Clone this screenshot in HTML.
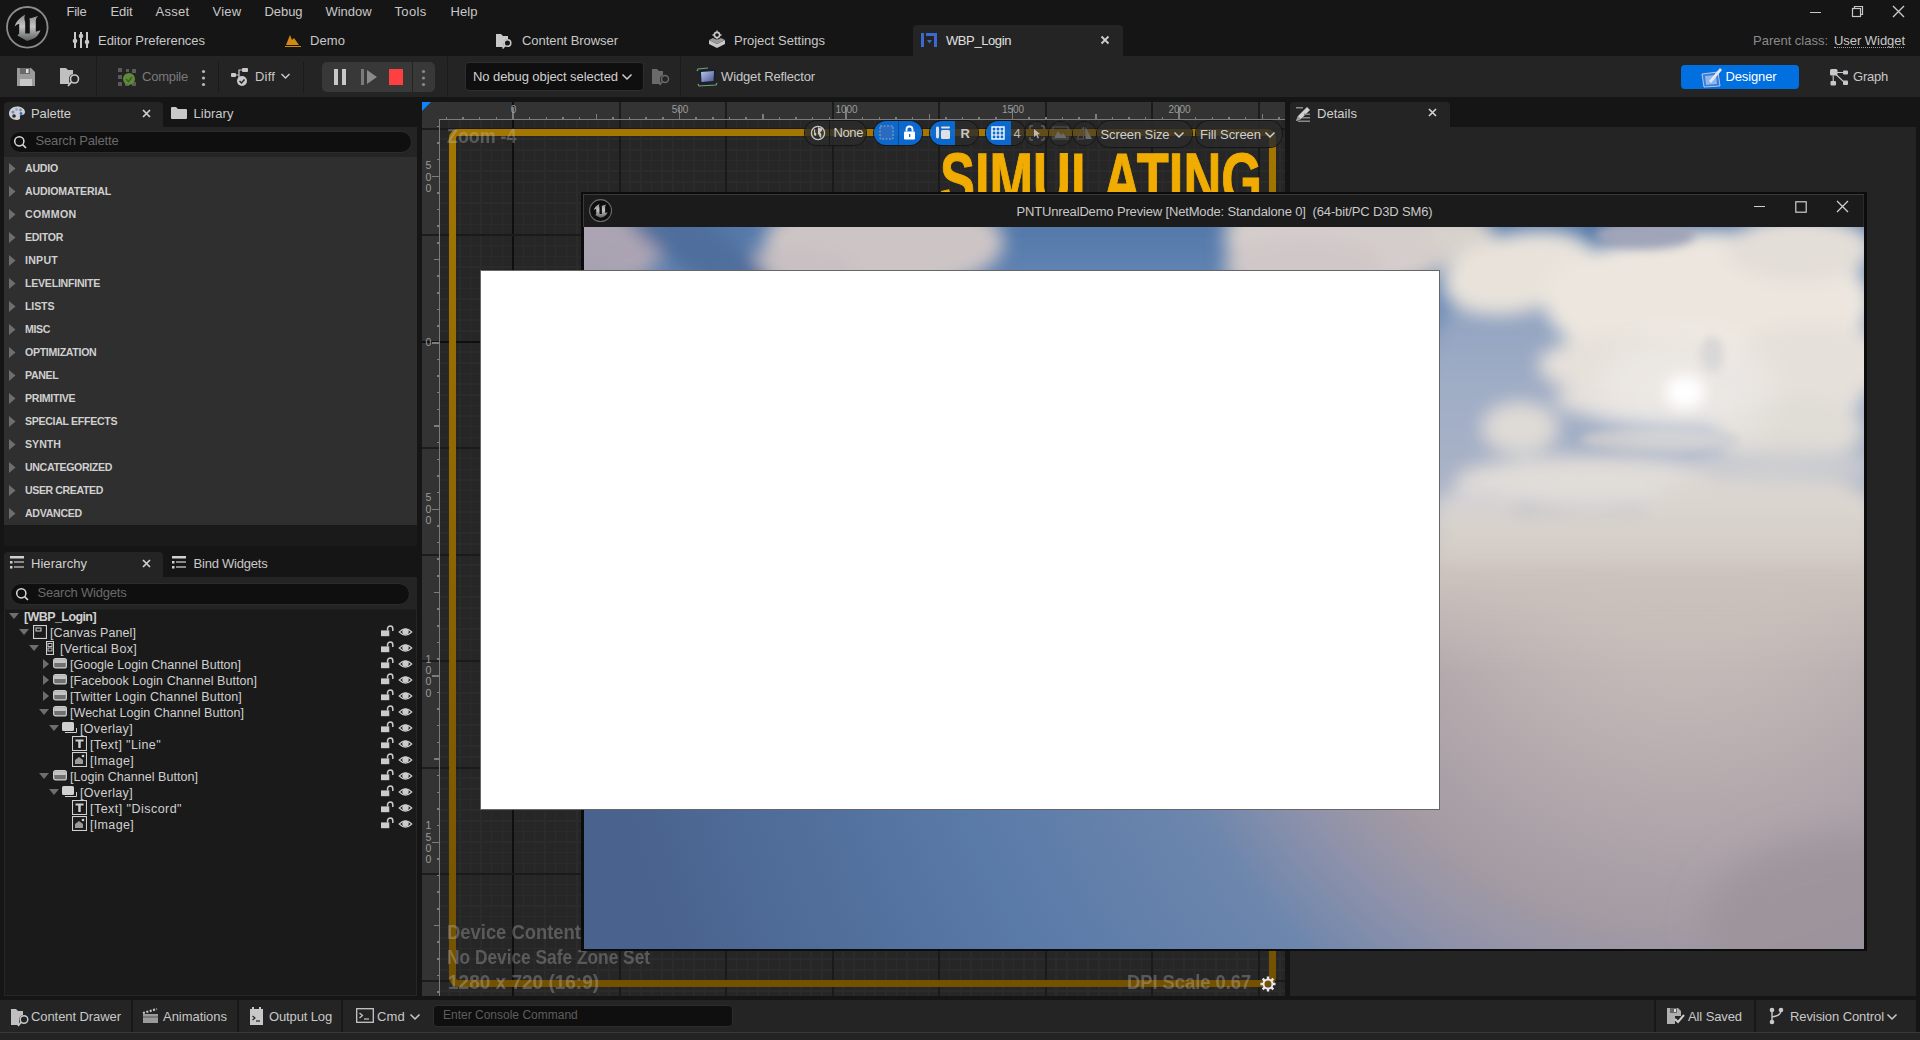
<!DOCTYPE html>
<html><head><meta charset="utf-8"><style>
html,body{margin:0;padding:0;}
body{width:1920px;height:1040px;overflow:hidden;position:relative;background:#151515;font-family:"Liberation Sans",sans-serif;}
.r{position:absolute;}
.t{position:absolute;white-space:pre;font-family:"Liberation Sans",sans-serif;}
</style></head><body>
<div class="r" style="left:0px;top:0px;width:1920px;height:56px;background:#151515;"></div>
<div class="r" style="left:0px;top:56px;width:1920px;height:41px;background:#242424;"></div>
<div class="r" style="left:0px;top:97px;width:1920px;height:5px;background:#151515;"></div>
<svg class="r" style="left:4px;top:4px;" width="48" height="48" viewBox="0 0 48 48"><defs><linearGradient id="ug" x1="0" y1="0" x2="0" y2="1"><stop offset="0" stop-color="#8a8a8a"/><stop offset="0.45" stop-color="#c4c4c4"/><stop offset="1" stop-color="#5a6060"/></linearGradient></defs>
<circle cx="23.3" cy="23.3" r="20.3" fill="#121212" stroke="#8c8c8c" stroke-width="1.8"/>
<path d="M10.6 22.6 Q12 16 21.2 10.6 Q19.6 13.5 21.2 18.5 L21.2 29.5 L25.8 29.5 L25.8 15.7 L24.9 14.8 Q29 13.5 34.1 12 Q31.8 14 31.8 16.2 L31.8 27.7 L36.5 26.3 Q34 33 28.6 35.1 L23.1 36.9 Q18 34 13.4 31.4 L15.2 29.5 L15.2 19.8 Q12.5 20.5 10.6 22.6 Z" fill="url(#ug)"/></svg>
<div class="t" style="left:66.50px;top:5.00px;font-size:13px;line-height:13px;color:#c8c8c8;letter-spacing:-0.238px;">File</div>
<div class="t" style="left:110.50px;top:5.00px;font-size:13px;line-height:13px;color:#c8c8c8;letter-spacing:-0.102px;">Edit</div>
<div class="t" style="left:155.50px;top:5.00px;font-size:13px;line-height:13px;color:#c8c8c8;letter-spacing:0.297px;">Asset</div>
<div class="t" style="left:212.50px;top:5.00px;font-size:13px;line-height:13px;color:#c8c8c8;letter-spacing:0.262px;">View</div>
<div class="t" style="left:264.50px;top:5.00px;font-size:13px;line-height:13px;color:#c8c8c8;letter-spacing:-0.066px;">Debug</div>
<div class="t" style="left:325.50px;top:5.00px;font-size:13px;line-height:13px;color:#c8c8c8;letter-spacing:-0.042px;">Window</div>
<div class="t" style="left:394.50px;top:5.00px;font-size:13px;line-height:13px;color:#c8c8c8;letter-spacing:0.328px;">Tools</div>
<div class="t" style="left:450.50px;top:5.00px;font-size:13px;line-height:13px;color:#c8c8c8;letter-spacing:0.062px;">Help</div>
<svg class="r" style="left:72px;top:31px;" width="18" height="18" viewBox="0 0 18 18"><g fill="#c8c8c8"><rect x="2" y="1" width="2" height="16"/><rect x="8" y="1" width="2" height="16"/><rect x="14" y="1" width="2" height="16"/><circle cx="3" cy="10" r="2.3"/><circle cx="9" cy="5" r="2.3"/><circle cx="15" cy="11" r="2.3"/></g></svg>
<div class="t" style="left:98.00px;top:34.00px;font-size:13px;line-height:13px;color:#c8c8c8;letter-spacing:-0.038px;">Editor Preferences</div>
<svg class="r" style="left:284px;top:33px;" width="18" height="15" viewBox="0 0 18 15"><path d="M1 13 L1 14 L17 14 L17 13 Z" fill="#d08a10"/><path d="M2 12 L6 2 L8 7 L10 5 L15 12 Z" fill="#d08a10"/></svg>
<div class="t" style="left:310.00px;top:34.00px;font-size:13px;line-height:13px;color:#c8c8c8;letter-spacing:0.078px;">Demo</div>
<svg class="r" style="left:495px;top:31px;" width="18" height="18" viewBox="0 0 18 18"><path d="M1 3 L6 3 L8 5 L13 5 L13 8 Q10 8 9 11 Q8 14 10 16 L1 16 Z" fill="#c8c8c8"/><circle cx="12.5" cy="12" r="3.3" fill="none" stroke="#c8c8c8" stroke-width="1.5"/><path d="M10.2 14.5 L7.5 17.5" stroke="#c8c8c8" stroke-width="1.6"/></svg>
<div class="t" style="left:522.00px;top:34.00px;font-size:13px;line-height:13px;color:#c8c8c8;letter-spacing:-0.056px;">Content Browser</div>
<svg class="r" style="left:708px;top:30px;" width="18" height="19" viewBox="0 0 18 19"><path d="M1 10 L9 14 L17 10 L17 14 L9 18 L1 14 Z" fill="#c8c8c8"/><path d="M1 10 L5 8 L9 10 L13 8 L17 10 L9 14 Z" fill="#9a9a9a"/><circle cx="9" cy="5" r="2.6" fill="none" stroke="#c8c8c8" stroke-width="1.6"/><g stroke="#c8c8c8" stroke-width="1.3"><path d="M9 0.5 V2"/><path d="M9 8 V9.5"/><path d="M4.5 5 H6"/><path d="M12 5 H13.5"/></g></svg>
<div class="t" style="left:734.00px;top:34.00px;font-size:13px;line-height:13px;color:#c8c8c8;letter-spacing:-0.004px;">Project Settings</div>
<div class="r" style="left:913px;top:25px;width:210px;height:31px;background:#242424;border-radius:4px 4px 0 0;"></div>
<svg class="r" style="left:920px;top:32px;" width="18" height="16" viewBox="0 0 18 16"><g fill="#3a6ad0"><rect x="1" y="1" width="3" height="14"/><rect x="6" y="1" width="11" height="3"/><rect x="14" y="4" width="3" height="11"/><path d="M7 8 L12 8 L9.5 11.5 Z"/></g></svg>
<div class="t" style="left:946.00px;top:34.00px;font-size:13px;line-height:13px;color:#e0e0e0;letter-spacing:-0.408px;">WBP_Login</div>
<svg class="r" style="left:1100px;top:35px;" width="10" height="10" viewBox="0 0 10 10"><path d="M1.5 1.5 L8.5 8.5 M8.5 1.5 L1.5 8.5" stroke="#d0d0d0" stroke-width="1.8"/></svg>
<div class="t" style="left:1753.00px;top:33.50px;font-size:13px;line-height:13px;color:#8a8a8a;letter-spacing:-0.012px;">Parent class:</div>
<div class="t" style="left:1834.00px;top:34.00px;font-size:13px;line-height:13px;color:#c8c8c8;letter-spacing:-0.048px;">User Widget</div>
<div class="r" style="left:1834px;top:47px;width:70px;height:0;border-top:1px dotted #a0a0a0;"></div>
<div class="r" style="left:1810px;top:12px;width:11px;height:1px;background:#c8c8c8;"></div>
<svg class="r" style="left:1850px;top:4px;" width="14" height="14" viewBox="0 0 14 14"><rect x="2.5" y="4.5" width="8" height="8" fill="none" stroke="#c8c8c8" stroke-width="1.2"/><path d="M4.5 4.5 V2.5 H12.5 V10.5 H10.5" fill="none" stroke="#c8c8c8" stroke-width="1.2"/></svg>
<svg class="r" style="left:1891px;top:4px;" width="15" height="15" viewBox="0 0 15 15"><path d="M2 2 L13 13 M13 2 L2 13" stroke="#c8c8c8" stroke-width="1.4"/></svg>
<svg class="r" style="left:16px;top:67px;" width="20" height="20" viewBox="0 0 20 20"><path d="M1 1 L15 1 L19 5 L19 19 L1 19 Z" fill="#9a9a9a"/><rect x="4" y="1" width="10" height="6" fill="#6a6a6a"/><rect x="10" y="2" width="2.5" height="4" fill="#ddd"/><rect x="4" y="12" width="12" height="7" fill="#c8c8c8"/></svg>
<svg class="r" style="left:59px;top:66px;" width="22" height="22" viewBox="0 0 22 22"><path d="M1 2 L7 2 L9 4 L14 4 L14 8 Q10 9 10 13 Q10 16 11 18 L1 18 Z" fill="#c0c0c0"/><circle cx="15.5" cy="13" r="4" fill="none" stroke="#c8c8c8" stroke-width="1.6"/><path d="M12.5 16 L9 20" stroke="#c8c8c8" stroke-width="1.8"/></svg>
<div class="r" style="left:96px;top:57px;width:1px;height:40px;background:#1a1a1a;"></div>
<svg class="r" style="left:117px;top:67px;" width="22" height="22" viewBox="0 0 22 22"><g fill="#5a5a5a"><rect x="1" y="1" width="4" height="4"/><rect x="9" y="2" width="3" height="3"/><rect x="15" y="2" width="4" height="4"/><rect x="1" y="8" width="4" height="4"/><rect x="1" y="15" width="4" height="4"/><rect x="8" y="15" width="4" height="4"/><rect x="15" y="15" width="4" height="4"/></g><circle cx="12" cy="12" r="6" fill="#5f8a3a"/><path d="M9 12 L11.5 14.5 L15 10" stroke="#3f5f28" stroke-width="1.6" fill="none"/></svg>
<div class="t" style="left:142.00px;top:69.60px;font-size:13px;line-height:13px;color:#7a7a7a;letter-spacing:-0.243px;">Compile</div>
<svg class="r" style="left:200px;top:69px;" width="7" height="18" viewBox="0 0 7 18"><circle cx="3.5" cy="2.5" r="1.6" fill="#b8b8b8"/><circle cx="3.5" cy="9" r="1.6" fill="#b8b8b8"/><circle cx="3.5" cy="15.5" r="1.6" fill="#b8b8b8"/></svg>
<div class="r" style="left:218px;top:62px;width:1px;height:30px;background:#1a1a1a;"></div>
<svg class="r" style="left:230px;top:67px;" width="20" height="20" viewBox="0 0 20 20"><rect x="1" y="6" width="5" height="4" rx="1" fill="#c8c8c8"/><rect x="12" y="1" width="6" height="4" rx="1" fill="#c8c8c8"/><path d="M6 8 H9 V3 H12" stroke="#c8c8c8" stroke-width="1.2" fill="none"/><path d="M9 8 V12" stroke="#c8c8c8" stroke-width="1.2"/><circle cx="12" cy="14" r="5" fill="#c8c8c8"/><path d="M9.5 14 L11.5 16 L14.5 12.5" stroke="#242424" stroke-width="1.5" fill="none"/></svg>
<div class="t" style="left:255.00px;top:69.60px;font-size:13px;line-height:13px;color:#c8c8c8;letter-spacing:0.184px;">Diff</div>
<svg class="r" style="left:280px;top:72px;" width="11" height="8" viewBox="0 0 11 8"><path d="M1.5 2 L5.5 6 L9.5 2" stroke="#c8c8c8" stroke-width="1.5" fill="none"/></svg>
<div class="r" style="left:303px;top:62px;width:1px;height:30px;background:#1a1a1a;"></div>
<div class="r" style="left:322px;top:62px;width:113px;height:30px;background:#383838;border-radius:5px;"></div>
<div class="r" style="left:412px;top:62px;width:1px;height:30px;background:#242424;"></div>
<div class="r" style="left:334px;top:69px;width:4px;height:16px;background:#c8c8c8;"></div>
<div class="r" style="left:342px;top:69px;width:4px;height:16px;background:#c8c8c8;"></div>
<div class="r" style="left:361px;top:69px;width:3px;height:16px;background:#7a7a7a;"></div>
<svg class="r" style="left:366px;top:69px;" width="12" height="16" viewBox="0 0 12 16"><path d="M1 1 L11 8 L1 15 Z" fill="#8a8a8a"/></svg>
<div class="r" style="left:389px;top:69px;width:14px;height:16px;background:#ff4040;"></div>
<svg class="r" style="left:420px;top:69px;" width="7" height="18" viewBox="0 0 7 18"><circle cx="3.5" cy="2.5" r="1.6" fill="#8a8a8a"/><circle cx="3.5" cy="9" r="1.6" fill="#8a8a8a"/><circle cx="3.5" cy="15.5" r="1.6" fill="#8a8a8a"/></svg>
<div class="r" style="left:447px;top:57px;width:1px;height:40px;background:#1a1a1a;"></div>
<div class="r" style="left:465px;top:62px;width:179px;height:29px;background:#0f0f0f;border:1px solid #2e2e2e;box-sizing:border-box;border-radius:4px;"></div>
<div class="t" style="left:473.00px;top:70.00px;font-size:13px;line-height:13px;color:#d0d0d0;letter-spacing:-0.074px;">No debug object selected</div>
<svg class="r" style="left:621px;top:73px;" width="12" height="8" viewBox="0 0 12 8"><path d="M1.5 1.5 L6 6 L10.5 1.5" stroke="#d0d0d0" stroke-width="1.5" fill="none"/></svg>
<svg class="r" style="left:651px;top:67px;" width="20" height="20" viewBox="0 0 20 20"><path d="M1 2 L6 2 L8 4 L12 4 L12 8 Q9 9 9 12 Q9 15 10 17 L1 17 Z" fill="#6a6a6a"/><circle cx="14" cy="12" r="3.5" fill="none" stroke="#6a6a6a" stroke-width="1.5"/><path d="M11.5 14.5 L8.5 18" stroke="#6a6a6a" stroke-width="1.6"/></svg>
<div class="r" style="left:680px;top:57px;width:1px;height:40px;background:#1a1a1a;"></div>
<svg class="r" style="left:696px;top:67px;" width="22" height="20" viewBox="0 0 22 20"><defs><linearGradient id="wr" x1="0" y1="0" x2="1" y2="1"><stop offset="0" stop-color="#b8c4e8"/><stop offset="1" stop-color="#4a5a90"/></linearGradient></defs><path d="M3 3 L20 2 L19 16 L4 17 Z" fill="#1a1e30"/><path d="M5 5 L18 4 L17.5 14 L5.5 15 Z" fill="url(#wr)"/><path d="M1 4 L2 2 L12 1" stroke="#6aa870" stroke-width="1.2" fill="none"/><path d="M2 17 L3 19 L20 18 L21 16" stroke="#6aa870" stroke-width="1.2" fill="none"/></svg>
<div class="t" style="left:721.00px;top:70.00px;font-size:13px;line-height:13px;color:#c8c8c8;letter-spacing:-0.132px;">Widget Reflector</div>
<div class="r" style="left:1681px;top:65px;width:118px;height:24px;background:#0070e0;border-radius:4px;"></div>
<svg class="r" style="left:1700px;top:66px;" width="24" height="22" viewBox="0 0 24 22"><path d="M2 8 L18 6 L20 20 L4 21 Z" fill="#3a7ad8" stroke="#dde" stroke-width="0.8"/><path d="M5 10 L16 9 L17 18 L6 19 Z" fill="#8ab8f0"/><path d="M9 15 L20 2 L22 4 L11 17 Z" fill="#e8e8e8"/></svg>
<div class="t" style="left:1725.50px;top:69.50px;font-size:13px;line-height:13px;color:#ffffff;letter-spacing:-0.131px;">Designer</div>
<svg class="r" style="left:1829px;top:68px;" width="20" height="19" viewBox="0 0 20 19"><g fill="#c8c8c8"><rect x="1" y="1" width="7.5" height="6.5" rx="1.5"/><rect x="14" y="2.5" width="5" height="4" rx="1"/><rect x="1.5" y="13" width="5.5" height="4.5" rx="1"/><rect x="14" y="12.5" width="5" height="4.5" rx="1"/></g><path d="M8 4.5 H14 M4.2 7.5 V13 M7 6.5 L14.5 13.5" stroke="#c8c8c8" stroke-width="1.1" fill="none"/></svg>
<div class="t" style="left:1853.00px;top:69.50px;font-size:13px;line-height:13px;color:#c8c8c8;letter-spacing:-0.228px;">Graph</div>
<div class="r" style="left:4px;top:102px;width:159px;height:25px;background:#242424;border-radius:4px 4px 0 0;"></div>
<svg class="r" style="left:8px;top:105px;" width="18" height="16" viewBox="0 0 18 16"><path d="M9 1.5 C14 1.5 17 4 17 7 C17 9.5 15 10 13.5 10 C12 10 11.5 11 12 12.5 C12.5 14 11 15 9 15 C4 15 1 12 1 8.5 C1 4.5 4.5 1.5 9 1.5 Z" fill="#d0d0d0"/><circle cx="5" cy="7" r="1.6" fill="#7090c0"/><circle cx="8.5" cy="4.5" r="1.4" fill="#90a8d0"/><circle cx="12.5" cy="5" r="1.4" fill="#7090c0"/><circle cx="6" cy="11" r="1.8" fill="#2a2a2a"/><circle cx="13" cy="8.5" r="1.5" fill="#3a6ad0"/></svg>
<div class="t" style="left:31.00px;top:107.00px;font-size:13px;line-height:13px;color:#d0d0d0;letter-spacing:-0.069px;">Palette</div>
<svg class="r" style="left:142px;top:109px;" width="9" height="9" viewBox="0 0 9 9"><path d="M1 1 L8 8 M8 1 L1 8" stroke="#d0d0d0" stroke-width="1.7"/></svg>
<svg class="r" style="left:170px;top:106px;" width="18" height="14" viewBox="0 0 18 14"><path d="M1 2 Q1 1 2 1 L6 1 L8 3 L16 3 Q17 3 17 4 L17 12 Q17 13 16 13 L2 13 Q1 13 1 12 Z" fill="#c8c8c8"/></svg>
<div class="t" style="left:193.50px;top:107.00px;font-size:13px;line-height:13px;color:#c8c8c8;letter-spacing:0.036px;">Library</div>
<div class="r" style="left:4px;top:127px;width:413px;height:30px;background:#242424;"></div>
<div class="r" style="left:9px;top:131px;width:403px;height:22px;background:#0f0f0f;border:1px solid #2c2c2c;box-sizing:border-box;border-radius:11px;"></div>
<svg class="r" style="left:13px;top:135px;" width="15" height="15" viewBox="0 0 15 15"><circle cx="6.3" cy="6.3" r="4.6" fill="none" stroke="#d8d8d8" stroke-width="1.5"/><path d="M9.6 9.6 L13 13" stroke="#d8d8d8" stroke-width="1.6"/></svg>
<div class="t" style="left:35.50px;top:134.00px;font-size:13px;line-height:13px;color:#6a6a6a;letter-spacing:-0.164px;">Search Palette</div>
<div class="r" style="left:4px;top:157px;width:413px;height:368px;background:#2f2f2f;"></div>
<svg class="r" style="left:9px;top:163px;" width="8" height="11" viewBox="0 0 8 11"><path d="M0 0 L6.5 5.5 L0 11 Z" fill="#6e6e6e"/></svg>
<div class="t" style="left:25.00px;top:163.13px;font-size:10.6px;line-height:10.6px;color:#d0d0d0;font-weight:700;letter-spacing:-0.228px;">AUDIO</div>
<svg class="r" style="left:9px;top:186px;" width="8" height="11" viewBox="0 0 8 11"><path d="M0 0 L6.5 5.5 L0 11 Z" fill="#6e6e6e"/></svg>
<div class="t" style="left:25.00px;top:186.13px;font-size:10.6px;line-height:10.6px;color:#d0d0d0;font-weight:700;letter-spacing:-0.161px;">AUDIOMATERIAL</div>
<svg class="r" style="left:9px;top:209px;" width="8" height="11" viewBox="0 0 8 11"><path d="M0 0 L6.5 5.5 L0 11 Z" fill="#6e6e6e"/></svg>
<div class="t" style="left:25.00px;top:209.13px;font-size:10.6px;line-height:10.6px;color:#d0d0d0;font-weight:700;letter-spacing:0.344px;">COMMON</div>
<svg class="r" style="left:9px;top:232px;" width="8" height="11" viewBox="0 0 8 11"><path d="M0 0 L6.5 5.5 L0 11 Z" fill="#6e6e6e"/></svg>
<div class="t" style="left:25.00px;top:232.13px;font-size:10.6px;line-height:10.6px;color:#d0d0d0;font-weight:700;letter-spacing:-0.305px;">EDITOR</div>
<svg class="r" style="left:9px;top:255px;" width="8" height="11" viewBox="0 0 8 11"><path d="M0 0 L6.5 5.5 L0 11 Z" fill="#6e6e6e"/></svg>
<div class="t" style="left:25.00px;top:255.13px;font-size:10.6px;line-height:10.6px;color:#d0d0d0;font-weight:700;letter-spacing:0.244px;">INPUT</div>
<svg class="r" style="left:9px;top:278px;" width="8" height="11" viewBox="0 0 8 11"><path d="M0 0 L6.5 5.5 L0 11 Z" fill="#6e6e6e"/></svg>
<div class="t" style="left:25.00px;top:278.13px;font-size:10.6px;line-height:10.6px;color:#d0d0d0;font-weight:700;letter-spacing:-0.250px;">LEVELINFINITE</div>
<svg class="r" style="left:9px;top:301px;" width="8" height="11" viewBox="0 0 8 11"><path d="M0 0 L6.5 5.5 L0 11 Z" fill="#6e6e6e"/></svg>
<div class="t" style="left:25.00px;top:301.13px;font-size:10.6px;line-height:10.6px;color:#d0d0d0;font-weight:700;letter-spacing:-0.120px;">LISTS</div>
<svg class="r" style="left:9px;top:324px;" width="8" height="11" viewBox="0 0 8 11"><path d="M0 0 L6.5 5.5 L0 11 Z" fill="#6e6e6e"/></svg>
<div class="t" style="left:25.00px;top:324.13px;font-size:10.6px;line-height:10.6px;color:#d0d0d0;font-weight:700;letter-spacing:-0.330px;">MISC</div>
<svg class="r" style="left:9px;top:347px;" width="8" height="11" viewBox="0 0 8 11"><path d="M0 0 L6.5 5.5 L0 11 Z" fill="#6e6e6e"/></svg>
<div class="t" style="left:25.00px;top:347.13px;font-size:10.6px;line-height:10.6px;color:#d0d0d0;font-weight:700;letter-spacing:-0.309px;">OPTIMIZATION</div>
<svg class="r" style="left:9px;top:370px;" width="8" height="11" viewBox="0 0 8 11"><path d="M0 0 L6.5 5.5 L0 11 Z" fill="#6e6e6e"/></svg>
<div class="t" style="left:25.00px;top:370.13px;font-size:10.6px;line-height:10.6px;color:#d0d0d0;font-weight:700;letter-spacing:-0.351px;">PANEL</div>
<svg class="r" style="left:9px;top:393px;" width="8" height="11" viewBox="0 0 8 11"><path d="M0 0 L6.5 5.5 L0 11 Z" fill="#6e6e6e"/></svg>
<div class="t" style="left:25.00px;top:393.13px;font-size:10.6px;line-height:10.6px;color:#d0d0d0;font-weight:700;letter-spacing:-0.289px;">PRIMITIVE</div>
<svg class="r" style="left:9px;top:416px;" width="8" height="11" viewBox="0 0 8 11"><path d="M0 0 L6.5 5.5 L0 11 Z" fill="#6e6e6e"/></svg>
<div class="t" style="left:25.00px;top:416.13px;font-size:10.6px;line-height:10.6px;color:#d0d0d0;font-weight:700;letter-spacing:-0.319px;">SPECIAL EFFECTS</div>
<svg class="r" style="left:9px;top:439px;" width="8" height="11" viewBox="0 0 8 11"><path d="M0 0 L6.5 5.5 L0 11 Z" fill="#6e6e6e"/></svg>
<div class="t" style="left:25.00px;top:439.13px;font-size:10.6px;line-height:10.6px;color:#d0d0d0;font-weight:700;letter-spacing:0.019px;">SYNTH</div>
<svg class="r" style="left:9px;top:462px;" width="8" height="11" viewBox="0 0 8 11"><path d="M0 0 L6.5 5.5 L0 11 Z" fill="#6e6e6e"/></svg>
<div class="t" style="left:25.00px;top:462.13px;font-size:10.6px;line-height:10.6px;color:#d0d0d0;font-weight:700;letter-spacing:-0.356px;">UNCATEGORIZED</div>
<svg class="r" style="left:9px;top:485px;" width="8" height="11" viewBox="0 0 8 11"><path d="M0 0 L6.5 5.5 L0 11 Z" fill="#6e6e6e"/></svg>
<div class="t" style="left:25.00px;top:485.13px;font-size:10.6px;line-height:10.6px;color:#d0d0d0;font-weight:700;letter-spacing:-0.401px;">USER CREATED</div>
<svg class="r" style="left:9px;top:508px;" width="8" height="11" viewBox="0 0 8 11"><path d="M0 0 L6.5 5.5 L0 11 Z" fill="#6e6e6e"/></svg>
<div class="t" style="left:25.00px;top:508.13px;font-size:10.6px;line-height:10.6px;color:#d0d0d0;font-weight:700;letter-spacing:-0.285px;">ADVANCED</div>
<div class="r" style="left:4px;top:525px;width:413px;height:21px;background:#1a1a1a;"></div>
<div class="r" style="left:4px;top:552px;width:159px;height:25px;background:#242424;border-radius:4px 4px 0 0;"></div>
<svg class="r" style="left:9px;top:555px;" width="16" height="14" viewBox="0 0 16 14"><g fill="#d0d0d0"><rect x="1" y="1" width="14" height="2.5"/><rect x="1" y="6" width="2.5" height="2.5"/><rect x="5" y="6" width="10" height="2"/><rect x="1" y="11" width="2.5" height="2.5"/><rect x="5" y="11" width="10" height="2"/></g><g fill="#8a8a8a"><rect x="5" y="6" width="10" height="2"/><rect x="5" y="11" width="10" height="2"/></g></svg>
<div class="t" style="left:31.00px;top:557.00px;font-size:13px;line-height:13px;color:#d0d0d0;letter-spacing:0.040px;">Hierarchy</div>
<svg class="r" style="left:142px;top:559px;" width="9" height="9" viewBox="0 0 9 9"><path d="M1 1 L8 8 M8 1 L1 8" stroke="#d0d0d0" stroke-width="1.7"/></svg>
<svg class="r" style="left:171px;top:555px;" width="16" height="14" viewBox="0 0 16 14"><g fill="#d0d0d0"><rect x="1" y="1" width="14" height="2.5"/><rect x="1" y="6" width="2.5" height="2.5"/><rect x="1" y="11" width="2.5" height="2.5"/></g><g fill="#8a8a8a"><rect x="5" y="6" width="10" height="2"/><rect x="5" y="11" width="10" height="2"/></g></svg>
<div class="t" style="left:193.50px;top:557.00px;font-size:13px;line-height:13px;color:#c8c8c8;letter-spacing:-0.217px;">Bind Widgets</div>
<div class="r" style="left:4px;top:577px;width:413px;height:32px;background:#242424;"></div>
<div class="r" style="left:10px;top:583px;width:400px;height:22px;background:#0f0f0f;border:1px solid #2c2c2c;box-sizing:border-box;border-radius:11px;"></div>
<svg class="r" style="left:15px;top:587px;" width="15" height="15" viewBox="0 0 15 15"><circle cx="6.3" cy="6.3" r="4.6" fill="none" stroke="#d8d8d8" stroke-width="1.5"/><path d="M9.6 9.6 L13 13" stroke="#d8d8d8" stroke-width="1.6"/></svg>
<div class="t" style="left:37.50px;top:586.00px;font-size:13px;line-height:13px;color:#6a6a6a;letter-spacing:-0.199px;">Search Widgets</div>
<div class="r" style="left:4px;top:609px;width:413px;height:387px;background:#1a1a1a;border:1px solid #262626;box-sizing:border-box;"></div>
<div class="r" style="left:4px;top:609px;width:413px;height:1px;background:#1f1f1f;"></div>
<svg class="r" style="left:9px;top:613px;" width="10" height="6" viewBox="0 0 10 6"><path d="M0 0 L10 0 L5 6 Z" fill="#6e6e6e"/></svg>
<div class="t" style="left:24.00px;top:610.82px;font-size:12.5px;line-height:12.5px;color:#d0d0d0;font-weight:700;letter-spacing:-0.588px;">[WBP_Login]</div>
<svg class="r" style="left:19px;top:629px;" width="10" height="6" viewBox="0 0 10 6"><path d="M0 0 L10 0 L5 6 Z" fill="#6e6e6e"/></svg>
<svg class="r" style="left:33px;top:625px;" width="14" height="14" viewBox="0 0 14 14"><rect x="0.5" y="0.5" width="13" height="13" fill="none" stroke="#d0d0d0" stroke-width="1.2"/><rect x="3" y="3" width="5" height="3" fill="none" stroke="#d0d0d0" stroke-width="1"/></svg>
<div class="t" style="left:50.00px;top:626.82px;font-size:12.5px;line-height:12.5px;color:#d0d0d0;letter-spacing:0.087px;">[Canvas Panel]</div>
<svg class="r" style="left:380px;top:625px;" width="14" height="12" viewBox="0 0 14 12"><rect x="1" y="5.4" width="8.3" height="5.8" fill="#cccccc"/><path d="M7.6 5.6 V3.6 A2.6 2.6 0 0 1 12.8 3.6 V6" stroke="#cccccc" stroke-width="1.5" fill="none"/></svg>
<svg class="r" style="left:398px;top:627px;" width="15" height="10" viewBox="0 0 15 10"><path d="M1.2 5 Q7.5 -1.2 13.8 5 Q7.5 11.2 1.2 5 Z" fill="none" stroke="#cccccc" stroke-width="1.1"/><circle cx="7.5" cy="4.6" r="3.2" fill="#cccccc"/></svg>
<svg class="r" style="left:29px;top:645px;" width="10" height="6" viewBox="0 0 10 6"><path d="M0 0 L10 0 L5 6 Z" fill="#6e6e6e"/></svg>
<svg class="r" style="left:46px;top:641px;" width="8" height="14" viewBox="0 0 8 14"><rect x="0.5" y="0.5" width="7" height="13" fill="none" stroke="#d0d0d0" stroke-width="1.1"/><rect x="2" y="2.5" width="4" height="3" fill="none" stroke="#d0d0d0" stroke-width="0.9"/><rect x="2" y="7" width="4" height="3" fill="none" stroke="#d0d0d0" stroke-width="0.9"/></svg>
<div class="t" style="left:60.00px;top:642.82px;font-size:12.5px;line-height:12.5px;color:#d0d0d0;letter-spacing:0.289px;">[Vertical Box]</div>
<svg class="r" style="left:380px;top:641px;" width="14" height="12" viewBox="0 0 14 12"><rect x="1" y="5.4" width="8.3" height="5.8" fill="#cccccc"/><path d="M7.6 5.6 V3.6 A2.6 2.6 0 0 1 12.8 3.6 V6" stroke="#cccccc" stroke-width="1.5" fill="none"/></svg>
<svg class="r" style="left:398px;top:643px;" width="15" height="10" viewBox="0 0 15 10"><path d="M1.2 5 Q7.5 -1.2 13.8 5 Q7.5 11.2 1.2 5 Z" fill="none" stroke="#cccccc" stroke-width="1.1"/><circle cx="7.5" cy="4.6" r="3.2" fill="#cccccc"/></svg>
<svg class="r" style="left:43px;top:659px;" width="6" height="10" viewBox="0 0 6 10"><path d="M0 0 L6 5 L0 10 Z" fill="#6e6e6e"/></svg>
<svg class="r" style="left:53px;top:658px;" width="14" height="11" viewBox="0 0 14 11"><rect x="0.6" y="0.6" width="12.8" height="9.3" rx="2" fill="#707070" stroke="#cccccc" stroke-width="1.2"/><path d="M1.2 2.6 Q1.2 1.2 2.6 1.2 L11.4 1.2 Q12.8 1.2 12.8 2.6 L12.8 5 L1.2 5 Z" fill="#c4c4c4"/></svg>
<div class="t" style="left:70.00px;top:658.82px;font-size:12.5px;line-height:12.5px;color:#d0d0d0;letter-spacing:0.001px;">[Google Login Channel Button]</div>
<svg class="r" style="left:380px;top:657px;" width="14" height="12" viewBox="0 0 14 12"><rect x="1" y="5.4" width="8.3" height="5.8" fill="#cccccc"/><path d="M7.6 5.6 V3.6 A2.6 2.6 0 0 1 12.8 3.6 V6" stroke="#cccccc" stroke-width="1.5" fill="none"/></svg>
<svg class="r" style="left:398px;top:659px;" width="15" height="10" viewBox="0 0 15 10"><path d="M1.2 5 Q7.5 -1.2 13.8 5 Q7.5 11.2 1.2 5 Z" fill="none" stroke="#cccccc" stroke-width="1.1"/><circle cx="7.5" cy="4.6" r="3.2" fill="#cccccc"/></svg>
<svg class="r" style="left:43px;top:675px;" width="6" height="10" viewBox="0 0 6 10"><path d="M0 0 L6 5 L0 10 Z" fill="#6e6e6e"/></svg>
<svg class="r" style="left:53px;top:674px;" width="14" height="11" viewBox="0 0 14 11"><rect x="0.6" y="0.6" width="12.8" height="9.3" rx="2" fill="#707070" stroke="#cccccc" stroke-width="1.2"/><path d="M1.2 2.6 Q1.2 1.2 2.6 1.2 L11.4 1.2 Q12.8 1.2 12.8 2.6 L12.8 5 L1.2 5 Z" fill="#c4c4c4"/></svg>
<div class="t" style="left:70.00px;top:674.82px;font-size:12.5px;line-height:12.5px;color:#d0d0d0;letter-spacing:0.046px;">[Facebook Login Channel Button]</div>
<svg class="r" style="left:380px;top:673px;" width="14" height="12" viewBox="0 0 14 12"><rect x="1" y="5.4" width="8.3" height="5.8" fill="#cccccc"/><path d="M7.6 5.6 V3.6 A2.6 2.6 0 0 1 12.8 3.6 V6" stroke="#cccccc" stroke-width="1.5" fill="none"/></svg>
<svg class="r" style="left:398px;top:675px;" width="15" height="10" viewBox="0 0 15 10"><path d="M1.2 5 Q7.5 -1.2 13.8 5 Q7.5 11.2 1.2 5 Z" fill="none" stroke="#cccccc" stroke-width="1.1"/><circle cx="7.5" cy="4.6" r="3.2" fill="#cccccc"/></svg>
<svg class="r" style="left:43px;top:691px;" width="6" height="10" viewBox="0 0 6 10"><path d="M0 0 L6 5 L0 10 Z" fill="#6e6e6e"/></svg>
<svg class="r" style="left:53px;top:690px;" width="14" height="11" viewBox="0 0 14 11"><rect x="0.6" y="0.6" width="12.8" height="9.3" rx="2" fill="#707070" stroke="#cccccc" stroke-width="1.2"/><path d="M1.2 2.6 Q1.2 1.2 2.6 1.2 L11.4 1.2 Q12.8 1.2 12.8 2.6 L12.8 5 L1.2 5 Z" fill="#c4c4c4"/></svg>
<div class="t" style="left:70.00px;top:690.82px;font-size:12.5px;line-height:12.5px;color:#d0d0d0;letter-spacing:0.151px;">[Twitter Login Channel Button]</div>
<svg class="r" style="left:380px;top:689px;" width="14" height="12" viewBox="0 0 14 12"><rect x="1" y="5.4" width="8.3" height="5.8" fill="#cccccc"/><path d="M7.6 5.6 V3.6 A2.6 2.6 0 0 1 12.8 3.6 V6" stroke="#cccccc" stroke-width="1.5" fill="none"/></svg>
<svg class="r" style="left:398px;top:691px;" width="15" height="10" viewBox="0 0 15 10"><path d="M1.2 5 Q7.5 -1.2 13.8 5 Q7.5 11.2 1.2 5 Z" fill="none" stroke="#cccccc" stroke-width="1.1"/><circle cx="7.5" cy="4.6" r="3.2" fill="#cccccc"/></svg>
<svg class="r" style="left:39px;top:709px;" width="10" height="6" viewBox="0 0 10 6"><path d="M0 0 L10 0 L5 6 Z" fill="#6e6e6e"/></svg>
<svg class="r" style="left:53px;top:706px;" width="14" height="11" viewBox="0 0 14 11"><rect x="0.6" y="0.6" width="12.8" height="9.3" rx="2" fill="#707070" stroke="#cccccc" stroke-width="1.2"/><path d="M1.2 2.6 Q1.2 1.2 2.6 1.2 L11.4 1.2 Q12.8 1.2 12.8 2.6 L12.8 5 L1.2 5 Z" fill="#c4c4c4"/></svg>
<div class="t" style="left:70.00px;top:706.82px;font-size:12.5px;line-height:12.5px;color:#d0d0d0;letter-spacing:0.041px;">[Wechat Login Channel Button]</div>
<svg class="r" style="left:380px;top:705px;" width="14" height="12" viewBox="0 0 14 12"><rect x="1" y="5.4" width="8.3" height="5.8" fill="#cccccc"/><path d="M7.6 5.6 V3.6 A2.6 2.6 0 0 1 12.8 3.6 V6" stroke="#cccccc" stroke-width="1.5" fill="none"/></svg>
<svg class="r" style="left:398px;top:707px;" width="15" height="10" viewBox="0 0 15 10"><path d="M1.2 5 Q7.5 -1.2 13.8 5 Q7.5 11.2 1.2 5 Z" fill="none" stroke="#cccccc" stroke-width="1.1"/><circle cx="7.5" cy="4.6" r="3.2" fill="#cccccc"/></svg>
<svg class="r" style="left:49px;top:725px;" width="10" height="6" viewBox="0 0 10 6"><path d="M0 0 L10 0 L5 6 Z" fill="#6e6e6e"/></svg>
<svg class="r" style="left:62px;top:722px;" width="16" height="12" viewBox="0 0 16 12"><rect x="0" y="0" width="12" height="9" rx="1.5" fill="#d0d0d0"/><path d="M3 10.5 H14.5 V6" stroke="#d0d0d0" stroke-width="1" fill="none"/></svg>
<div class="t" style="left:80.00px;top:722.82px;font-size:12.5px;line-height:12.5px;color:#d0d0d0;letter-spacing:0.333px;">[Overlay]</div>
<svg class="r" style="left:380px;top:721px;" width="14" height="12" viewBox="0 0 14 12"><rect x="1" y="5.4" width="8.3" height="5.8" fill="#cccccc"/><path d="M7.6 5.6 V3.6 A2.6 2.6 0 0 1 12.8 3.6 V6" stroke="#cccccc" stroke-width="1.5" fill="none"/></svg>
<svg class="r" style="left:398px;top:723px;" width="15" height="10" viewBox="0 0 15 10"><path d="M1.2 5 Q7.5 -1.2 13.8 5 Q7.5 11.2 1.2 5 Z" fill="none" stroke="#cccccc" stroke-width="1.1"/><circle cx="7.5" cy="4.6" r="3.2" fill="#cccccc"/></svg>
<svg class="r" style="left:72px;top:736px;" width="15" height="15" viewBox="0 0 15 15"><rect x="0.5" y="0.5" width="14" height="14" fill="none" stroke="#d0d0d0" stroke-width="1.1"/><path d="M3.5 3.5 H11.5 V5.5 H8.7 V12 H6.3 V5.5 H3.5 Z" fill="#d0d0d0"/></svg>
<div class="t" style="left:90.00px;top:738.82px;font-size:12.5px;line-height:12.5px;color:#d0d0d0;letter-spacing:0.397px;">[Text] "Line"</div>
<svg class="r" style="left:380px;top:737px;" width="14" height="12" viewBox="0 0 14 12"><rect x="1" y="5.4" width="8.3" height="5.8" fill="#cccccc"/><path d="M7.6 5.6 V3.6 A2.6 2.6 0 0 1 12.8 3.6 V6" stroke="#cccccc" stroke-width="1.5" fill="none"/></svg>
<svg class="r" style="left:398px;top:739px;" width="15" height="10" viewBox="0 0 15 10"><path d="M1.2 5 Q7.5 -1.2 13.8 5 Q7.5 11.2 1.2 5 Z" fill="none" stroke="#cccccc" stroke-width="1.1"/><circle cx="7.5" cy="4.6" r="3.2" fill="#cccccc"/></svg>
<svg class="r" style="left:72px;top:752px;" width="15" height="15" viewBox="0 0 15 15"><rect x="0.5" y="0.5" width="14" height="14" fill="none" stroke="#d0d0d0" stroke-width="1.1"/><path d="M3 12 V8 L7 5 L11 8 V12 Z" fill="#9a9a9a"/><circle cx="11" cy="4" r="1.3" fill="#d0d0d0"/></svg>
<div class="t" style="left:90.00px;top:754.82px;font-size:12.5px;line-height:12.5px;color:#d0d0d0;letter-spacing:0.333px;">[Image]</div>
<svg class="r" style="left:380px;top:753px;" width="14" height="12" viewBox="0 0 14 12"><rect x="1" y="5.4" width="8.3" height="5.8" fill="#cccccc"/><path d="M7.6 5.6 V3.6 A2.6 2.6 0 0 1 12.8 3.6 V6" stroke="#cccccc" stroke-width="1.5" fill="none"/></svg>
<svg class="r" style="left:398px;top:755px;" width="15" height="10" viewBox="0 0 15 10"><path d="M1.2 5 Q7.5 -1.2 13.8 5 Q7.5 11.2 1.2 5 Z" fill="none" stroke="#cccccc" stroke-width="1.1"/><circle cx="7.5" cy="4.6" r="3.2" fill="#cccccc"/></svg>
<svg class="r" style="left:39px;top:773px;" width="10" height="6" viewBox="0 0 10 6"><path d="M0 0 L10 0 L5 6 Z" fill="#6e6e6e"/></svg>
<svg class="r" style="left:53px;top:770px;" width="14" height="11" viewBox="0 0 14 11"><rect x="0.6" y="0.6" width="12.8" height="9.3" rx="2" fill="#707070" stroke="#cccccc" stroke-width="1.2"/><path d="M1.2 2.6 Q1.2 1.2 2.6 1.2 L11.4 1.2 Q12.8 1.2 12.8 2.6 L12.8 5 L1.2 5 Z" fill="#c4c4c4"/></svg>
<div class="t" style="left:70.00px;top:770.82px;font-size:12.5px;line-height:12.5px;color:#d0d0d0;letter-spacing:0.037px;">[Login Channel Button]</div>
<svg class="r" style="left:380px;top:769px;" width="14" height="12" viewBox="0 0 14 12"><rect x="1" y="5.4" width="8.3" height="5.8" fill="#cccccc"/><path d="M7.6 5.6 V3.6 A2.6 2.6 0 0 1 12.8 3.6 V6" stroke="#cccccc" stroke-width="1.5" fill="none"/></svg>
<svg class="r" style="left:398px;top:771px;" width="15" height="10" viewBox="0 0 15 10"><path d="M1.2 5 Q7.5 -1.2 13.8 5 Q7.5 11.2 1.2 5 Z" fill="none" stroke="#cccccc" stroke-width="1.1"/><circle cx="7.5" cy="4.6" r="3.2" fill="#cccccc"/></svg>
<svg class="r" style="left:49px;top:789px;" width="10" height="6" viewBox="0 0 10 6"><path d="M0 0 L10 0 L5 6 Z" fill="#6e6e6e"/></svg>
<svg class="r" style="left:62px;top:786px;" width="16" height="12" viewBox="0 0 16 12"><rect x="0" y="0" width="12" height="9" rx="1.5" fill="#d0d0d0"/><path d="M3 10.5 H14.5 V6" stroke="#d0d0d0" stroke-width="1" fill="none"/></svg>
<div class="t" style="left:80.00px;top:786.82px;font-size:12.5px;line-height:12.5px;color:#d0d0d0;letter-spacing:0.333px;">[Overlay]</div>
<svg class="r" style="left:380px;top:785px;" width="14" height="12" viewBox="0 0 14 12"><rect x="1" y="5.4" width="8.3" height="5.8" fill="#cccccc"/><path d="M7.6 5.6 V3.6 A2.6 2.6 0 0 1 12.8 3.6 V6" stroke="#cccccc" stroke-width="1.5" fill="none"/></svg>
<svg class="r" style="left:398px;top:787px;" width="15" height="10" viewBox="0 0 15 10"><path d="M1.2 5 Q7.5 -1.2 13.8 5 Q7.5 11.2 1.2 5 Z" fill="none" stroke="#cccccc" stroke-width="1.1"/><circle cx="7.5" cy="4.6" r="3.2" fill="#cccccc"/></svg>
<svg class="r" style="left:72px;top:800px;" width="15" height="15" viewBox="0 0 15 15"><rect x="0.5" y="0.5" width="14" height="14" fill="none" stroke="#d0d0d0" stroke-width="1.1"/><path d="M3.5 3.5 H11.5 V5.5 H8.7 V12 H6.3 V5.5 H3.5 Z" fill="#d0d0d0"/></svg>
<div class="t" style="left:90.00px;top:802.82px;font-size:12.5px;line-height:12.5px;color:#d0d0d0;letter-spacing:0.464px;">[Text] "Discord"</div>
<svg class="r" style="left:380px;top:801px;" width="14" height="12" viewBox="0 0 14 12"><rect x="1" y="5.4" width="8.3" height="5.8" fill="#cccccc"/><path d="M7.6 5.6 V3.6 A2.6 2.6 0 0 1 12.8 3.6 V6" stroke="#cccccc" stroke-width="1.5" fill="none"/></svg>
<svg class="r" style="left:398px;top:803px;" width="15" height="10" viewBox="0 0 15 10"><path d="M1.2 5 Q7.5 -1.2 13.8 5 Q7.5 11.2 1.2 5 Z" fill="none" stroke="#cccccc" stroke-width="1.1"/><circle cx="7.5" cy="4.6" r="3.2" fill="#cccccc"/></svg>
<svg class="r" style="left:72px;top:816px;" width="15" height="15" viewBox="0 0 15 15"><rect x="0.5" y="0.5" width="14" height="14" fill="none" stroke="#d0d0d0" stroke-width="1.1"/><path d="M3 12 V8 L7 5 L11 8 V12 Z" fill="#9a9a9a"/><circle cx="11" cy="4" r="1.3" fill="#d0d0d0"/></svg>
<div class="t" style="left:90.00px;top:818.82px;font-size:12.5px;line-height:12.5px;color:#d0d0d0;letter-spacing:0.333px;">[Image]</div>
<svg class="r" style="left:380px;top:817px;" width="14" height="12" viewBox="0 0 14 12"><rect x="1" y="5.4" width="8.3" height="5.8" fill="#cccccc"/><path d="M7.6 5.6 V3.6 A2.6 2.6 0 0 1 12.8 3.6 V6" stroke="#cccccc" stroke-width="1.5" fill="none"/></svg>
<svg class="r" style="left:398px;top:819px;" width="15" height="10" viewBox="0 0 15 10"><path d="M1.2 5 Q7.5 -1.2 13.8 5 Q7.5 11.2 1.2 5 Z" fill="none" stroke="#cccccc" stroke-width="1.1"/><circle cx="7.5" cy="4.6" r="3.2" fill="#cccccc"/></svg>
<div class="r" style="left:0px;top:1000px;width:1916px;height:32px;background:#242424;"></div>
<div class="r" style="left:0px;top:1032px;width:1920px;height:1px;background:#3a3a3a;"></div>
<div class="r" style="left:0px;top:1033px;width:1920px;height:7px;background:#232323;"></div>
<div class="r" style="left:131px;top:1000px;width:2px;height:32px;background:#181818;"></div>
<div class="r" style="left:237px;top:1000px;width:2px;height:32px;background:#181818;"></div>
<div class="r" style="left:341px;top:1000px;width:2px;height:32px;background:#181818;"></div>
<svg class="r" style="left:10px;top:1007px;" width="20" height="20" viewBox="0 0 20 20"><path d="M1 2 L6 2 L8 4 L13 4 L13 8 Q9 9 9 13 Q9 16 10 18 L1 18 Z" fill="#c0c0c0"/><circle cx="14" cy="12.5" r="3.8" fill="none" stroke="#c8c8c8" stroke-width="1.5"/><path d="M11.2 15.3 L8 19" stroke="#c8c8c8" stroke-width="1.7"/></svg>
<div class="t" style="left:31.00px;top:1010.00px;font-size:13px;line-height:13px;color:#c8c8c8;letter-spacing:-0.076px;">Content Drawer</div>
<svg class="r" style="left:142px;top:1008px;" width="17" height="16" viewBox="0 0 17 16"><path d="M1 6 L16 6 L16 15 L1 15 Z" fill="#9a9a9a"/><path d="M1 9 H16" stroke="#555" stroke-width="1"/><path d="M1 5 L15 1" stroke="#c8c8c8" stroke-width="2.2" stroke-dasharray="2 1.5"/></svg>
<div class="t" style="left:163.00px;top:1010.00px;font-size:13px;line-height:13px;color:#c8c8c8;letter-spacing:-0.033px;">Animations</div>
<svg class="r" style="left:249px;top:1006px;" width="15" height="20" viewBox="0 0 15 20"><path d="M1 3 L14 3 L14 19 L1 19 Z" fill="#c8c8c8"/><rect x="3" y="1" width="2" height="4" fill="#c8c8c8"/><rect x="10" y="1" width="2" height="4" fill="#c8c8c8"/><path d="M3.5 10 L6 12 L3.5 14" stroke="#242424" stroke-width="1.2" fill="none"/><path d="M7 15 H11" stroke="#242424" stroke-width="1.2"/></svg>
<div class="t" style="left:269.00px;top:1010.00px;font-size:13px;line-height:13px;color:#c8c8c8;letter-spacing:-0.134px;">Output Log</div>
<svg class="r" style="left:356px;top:1008px;" width="18" height="15" viewBox="0 0 18 15"><rect x="0.7" y="0.7" width="16.6" height="13.6" fill="none" stroke="#c8c8c8" stroke-width="1.3"/><path d="M3.5 5 L6.5 7.5 L3.5 10" stroke="#c8c8c8" stroke-width="1.2" fill="none"/><path d="M8 11 H13" stroke="#c8c8c8" stroke-width="1.2"/></svg>
<div class="t" style="left:377.00px;top:1010.00px;font-size:13px;line-height:13px;color:#c8c8c8;letter-spacing:0.182px;">Cmd</div>
<svg class="r" style="left:409px;top:1013px;" width="12" height="8" viewBox="0 0 12 8"><path d="M1.5 1.5 L6 6 L10.5 1.5" stroke="#c8c8c8" stroke-width="1.5" fill="none"/></svg>
<div class="r" style="left:433px;top:1005px;width:300px;height:22px;background:#0f0f0f;border:1px solid #2c2c2c;box-sizing:border-box;border-radius:4px;"></div>
<div class="t" style="left:443.00px;top:1009.34px;font-size:12px;line-height:12px;color:#5e5e5e;font-family:"Liberation Mono", monospace;letter-spacing:-0.203px;">Enter Console Command</div>
<div class="r" style="left:1654px;top:1000px;width:2px;height:32px;background:#181818;"></div>
<div class="r" style="left:1754px;top:1000px;width:2px;height:32px;background:#181818;"></div>
<svg class="r" style="left:1666px;top:1007px;" width="19" height="18" viewBox="0 0 19 18"><path d="M1 1 L12 1 L15 4 L15 9 L9 9 L9 17 L1 17 Z" fill="#b0b0b0"/><rect x="4" y="1" width="7" height="5" fill="#666"/><rect x="8" y="2" width="2" height="3" fill="#ddd"/><path d="M9 12 L12 15 L18 8" stroke="#d0d0d0" stroke-width="2" fill="none"/></svg>
<div class="t" style="left:1688.00px;top:1010.00px;font-size:13px;line-height:13px;color:#c8c8c8;letter-spacing:-0.104px;">All Saved</div>
<svg class="r" style="left:1769px;top:1007px;" width="16" height="18" viewBox="0 0 16 18"><circle cx="3" cy="3" r="2.3" fill="#c8c8c8"/><circle cx="12" cy="3" r="2.3" fill="#c8c8c8"/><circle cx="3" cy="15" r="2.3" fill="#c8c8c8"/><path d="M3 3 V15 M12 3 Q12 9 3 10" stroke="#c8c8c8" stroke-width="1.4" fill="none"/></svg>
<div class="t" style="left:1790.00px;top:1010.00px;font-size:13px;line-height:13px;color:#c8c8c8;letter-spacing:-0.088px;">Revision Control</div>
<svg class="r" style="left:1886px;top:1013px;" width="12" height="8" viewBox="0 0 12 8"><path d="M1.5 1.5 L6 6 L10.5 1.5" stroke="#c8c8c8" stroke-width="1.5" fill="none"/></svg>
<div class="r" style="left:422px;top:102px;width:863px;height:894px;background:#262626;overflow:hidden;">
<div class="r" style="left:5.05px;top:0;width:1.5px;height:100%;background:#2b2b2b;"></div><div class="r" style="left:15.70px;top:0;width:1.5px;height:100%;background:#2b2b2b;"></div><div class="r" style="left:26.35px;top:0;width:1.5px;height:100%;background:#2b2b2b;"></div><div class="r" style="left:37.00px;top:0;width:1.5px;height:100%;background:#2b2b2b;"></div><div class="r" style="left:47.65px;top:0;width:1.5px;height:100%;background:#2b2b2b;"></div><div class="r" style="left:58.30px;top:0;width:1.5px;height:100%;background:#2b2b2b;"></div><div class="r" style="left:68.95px;top:0;width:1.5px;height:100%;background:#2b2b2b;"></div><div class="r" style="left:79.60px;top:0;width:1.5px;height:100%;background:#2b2b2b;"></div><div class="r" style="left:90.25px;top:0;width:1.5px;height:100%;background:#2b2b2b;"></div><div class="r" style="left:100.90px;top:0;width:1.5px;height:100%;background:#2b2b2b;"></div><div class="r" style="left:111.55px;top:0;width:1.5px;height:100%;background:#2b2b2b;"></div><div class="r" style="left:122.20px;top:0;width:1.5px;height:100%;background:#2b2b2b;"></div><div class="r" style="left:132.85px;top:0;width:1.5px;height:100%;background:#2b2b2b;"></div><div class="r" style="left:143.50px;top:0;width:1.5px;height:100%;background:#2b2b2b;"></div><div class="r" style="left:154.15px;top:0;width:1.5px;height:100%;background:#2b2b2b;"></div><div class="r" style="left:164.80px;top:0;width:1.5px;height:100%;background:#2b2b2b;"></div><div class="r" style="left:175.45px;top:0;width:1.5px;height:100%;background:#2b2b2b;"></div><div class="r" style="left:186.10px;top:0;width:1.5px;height:100%;background:#2b2b2b;"></div><div class="r" style="left:196.75px;top:0;width:1.5px;height:100%;background:#2b2b2b;"></div><div class="r" style="left:207.40px;top:0;width:1.5px;height:100%;background:#2b2b2b;"></div><div class="r" style="left:218.05px;top:0;width:1.5px;height:100%;background:#2b2b2b;"></div><div class="r" style="left:228.70px;top:0;width:1.5px;height:100%;background:#2b2b2b;"></div><div class="r" style="left:239.35px;top:0;width:1.5px;height:100%;background:#2b2b2b;"></div><div class="r" style="left:250.00px;top:0;width:1.5px;height:100%;background:#2b2b2b;"></div><div class="r" style="left:260.65px;top:0;width:1.5px;height:100%;background:#2b2b2b;"></div><div class="r" style="left:271.30px;top:0;width:1.5px;height:100%;background:#2b2b2b;"></div><div class="r" style="left:281.95px;top:0;width:1.5px;height:100%;background:#2b2b2b;"></div><div class="r" style="left:292.60px;top:0;width:1.5px;height:100%;background:#2b2b2b;"></div><div class="r" style="left:303.25px;top:0;width:1.5px;height:100%;background:#2b2b2b;"></div><div class="r" style="left:313.90px;top:0;width:1.5px;height:100%;background:#2b2b2b;"></div><div class="r" style="left:324.55px;top:0;width:1.5px;height:100%;background:#2b2b2b;"></div><div class="r" style="left:335.20px;top:0;width:1.5px;height:100%;background:#2b2b2b;"></div><div class="r" style="left:345.85px;top:0;width:1.5px;height:100%;background:#2b2b2b;"></div><div class="r" style="left:356.50px;top:0;width:1.5px;height:100%;background:#2b2b2b;"></div><div class="r" style="left:367.15px;top:0;width:1.5px;height:100%;background:#2b2b2b;"></div><div class="r" style="left:377.80px;top:0;width:1.5px;height:100%;background:#2b2b2b;"></div><div class="r" style="left:388.45px;top:0;width:1.5px;height:100%;background:#2b2b2b;"></div><div class="r" style="left:399.10px;top:0;width:1.5px;height:100%;background:#2b2b2b;"></div><div class="r" style="left:409.75px;top:0;width:1.5px;height:100%;background:#2b2b2b;"></div><div class="r" style="left:420.40px;top:0;width:1.5px;height:100%;background:#2b2b2b;"></div><div class="r" style="left:431.05px;top:0;width:1.5px;height:100%;background:#2b2b2b;"></div><div class="r" style="left:441.70px;top:0;width:1.5px;height:100%;background:#2b2b2b;"></div><div class="r" style="left:452.35px;top:0;width:1.5px;height:100%;background:#2b2b2b;"></div><div class="r" style="left:463.00px;top:0;width:1.5px;height:100%;background:#2b2b2b;"></div><div class="r" style="left:473.65px;top:0;width:1.5px;height:100%;background:#2b2b2b;"></div><div class="r" style="left:484.30px;top:0;width:1.5px;height:100%;background:#2b2b2b;"></div><div class="r" style="left:494.95px;top:0;width:1.5px;height:100%;background:#2b2b2b;"></div><div class="r" style="left:505.60px;top:0;width:1.5px;height:100%;background:#2b2b2b;"></div><div class="r" style="left:516.25px;top:0;width:1.5px;height:100%;background:#2b2b2b;"></div><div class="r" style="left:526.90px;top:0;width:1.5px;height:100%;background:#2b2b2b;"></div><div class="r" style="left:537.55px;top:0;width:1.5px;height:100%;background:#2b2b2b;"></div><div class="r" style="left:548.20px;top:0;width:1.5px;height:100%;background:#2b2b2b;"></div><div class="r" style="left:558.85px;top:0;width:1.5px;height:100%;background:#2b2b2b;"></div><div class="r" style="left:569.50px;top:0;width:1.5px;height:100%;background:#2b2b2b;"></div><div class="r" style="left:580.15px;top:0;width:1.5px;height:100%;background:#2b2b2b;"></div><div class="r" style="left:590.80px;top:0;width:1.5px;height:100%;background:#2b2b2b;"></div><div class="r" style="left:601.45px;top:0;width:1.5px;height:100%;background:#2b2b2b;"></div><div class="r" style="left:612.10px;top:0;width:1.5px;height:100%;background:#2b2b2b;"></div><div class="r" style="left:622.75px;top:0;width:1.5px;height:100%;background:#2b2b2b;"></div><div class="r" style="left:633.40px;top:0;width:1.5px;height:100%;background:#2b2b2b;"></div><div class="r" style="left:644.05px;top:0;width:1.5px;height:100%;background:#2b2b2b;"></div><div class="r" style="left:654.70px;top:0;width:1.5px;height:100%;background:#2b2b2b;"></div><div class="r" style="left:665.35px;top:0;width:1.5px;height:100%;background:#2b2b2b;"></div><div class="r" style="left:676.00px;top:0;width:1.5px;height:100%;background:#2b2b2b;"></div><div class="r" style="left:686.65px;top:0;width:1.5px;height:100%;background:#2b2b2b;"></div><div class="r" style="left:697.30px;top:0;width:1.5px;height:100%;background:#2b2b2b;"></div><div class="r" style="left:707.95px;top:0;width:1.5px;height:100%;background:#2b2b2b;"></div><div class="r" style="left:718.60px;top:0;width:1.5px;height:100%;background:#2b2b2b;"></div><div class="r" style="left:729.25px;top:0;width:1.5px;height:100%;background:#2b2b2b;"></div><div class="r" style="left:739.90px;top:0;width:1.5px;height:100%;background:#2b2b2b;"></div><div class="r" style="left:750.55px;top:0;width:1.5px;height:100%;background:#2b2b2b;"></div><div class="r" style="left:761.20px;top:0;width:1.5px;height:100%;background:#2b2b2b;"></div><div class="r" style="left:771.85px;top:0;width:1.5px;height:100%;background:#2b2b2b;"></div><div class="r" style="left:782.50px;top:0;width:1.5px;height:100%;background:#2b2b2b;"></div><div class="r" style="left:793.15px;top:0;width:1.5px;height:100%;background:#2b2b2b;"></div><div class="r" style="left:803.80px;top:0;width:1.5px;height:100%;background:#2b2b2b;"></div><div class="r" style="left:814.45px;top:0;width:1.5px;height:100%;background:#2b2b2b;"></div><div class="r" style="left:825.10px;top:0;width:1.5px;height:100%;background:#2b2b2b;"></div><div class="r" style="left:835.75px;top:0;width:1.5px;height:100%;background:#2b2b2b;"></div><div class="r" style="left:846.40px;top:0;width:1.5px;height:100%;background:#2b2b2b;"></div><div class="r" style="left:857.05px;top:0;width:1.5px;height:100%;background:#2b2b2b;"></div><div class="r" style="left:0;top:4.45px;width:100%;height:1.5px;background:#2b2b2b;"></div><div class="r" style="left:0;top:15.10px;width:100%;height:1.5px;background:#2b2b2b;"></div><div class="r" style="left:0;top:25.75px;width:100%;height:1.5px;background:#2b2b2b;"></div><div class="r" style="left:0;top:36.40px;width:100%;height:1.5px;background:#2b2b2b;"></div><div class="r" style="left:0;top:47.05px;width:100%;height:1.5px;background:#2b2b2b;"></div><div class="r" style="left:0;top:57.70px;width:100%;height:1.5px;background:#2b2b2b;"></div><div class="r" style="left:0;top:68.35px;width:100%;height:1.5px;background:#2b2b2b;"></div><div class="r" style="left:0;top:79.00px;width:100%;height:1.5px;background:#2b2b2b;"></div><div class="r" style="left:0;top:89.65px;width:100%;height:1.5px;background:#2b2b2b;"></div><div class="r" style="left:0;top:100.30px;width:100%;height:1.5px;background:#2b2b2b;"></div><div class="r" style="left:0;top:110.95px;width:100%;height:1.5px;background:#2b2b2b;"></div><div class="r" style="left:0;top:121.60px;width:100%;height:1.5px;background:#2b2b2b;"></div><div class="r" style="left:0;top:132.25px;width:100%;height:1.5px;background:#2b2b2b;"></div><div class="r" style="left:0;top:142.90px;width:100%;height:1.5px;background:#2b2b2b;"></div><div class="r" style="left:0;top:153.55px;width:100%;height:1.5px;background:#2b2b2b;"></div><div class="r" style="left:0;top:164.20px;width:100%;height:1.5px;background:#2b2b2b;"></div><div class="r" style="left:0;top:174.85px;width:100%;height:1.5px;background:#2b2b2b;"></div><div class="r" style="left:0;top:185.50px;width:100%;height:1.5px;background:#2b2b2b;"></div><div class="r" style="left:0;top:196.15px;width:100%;height:1.5px;background:#2b2b2b;"></div><div class="r" style="left:0;top:206.80px;width:100%;height:1.5px;background:#2b2b2b;"></div><div class="r" style="left:0;top:217.45px;width:100%;height:1.5px;background:#2b2b2b;"></div><div class="r" style="left:0;top:228.10px;width:100%;height:1.5px;background:#2b2b2b;"></div><div class="r" style="left:0;top:238.75px;width:100%;height:1.5px;background:#2b2b2b;"></div><div class="r" style="left:0;top:249.40px;width:100%;height:1.5px;background:#2b2b2b;"></div><div class="r" style="left:0;top:260.05px;width:100%;height:1.5px;background:#2b2b2b;"></div><div class="r" style="left:0;top:270.70px;width:100%;height:1.5px;background:#2b2b2b;"></div><div class="r" style="left:0;top:281.35px;width:100%;height:1.5px;background:#2b2b2b;"></div><div class="r" style="left:0;top:292.00px;width:100%;height:1.5px;background:#2b2b2b;"></div><div class="r" style="left:0;top:302.65px;width:100%;height:1.5px;background:#2b2b2b;"></div><div class="r" style="left:0;top:313.30px;width:100%;height:1.5px;background:#2b2b2b;"></div><div class="r" style="left:0;top:323.95px;width:100%;height:1.5px;background:#2b2b2b;"></div><div class="r" style="left:0;top:334.60px;width:100%;height:1.5px;background:#2b2b2b;"></div><div class="r" style="left:0;top:345.25px;width:100%;height:1.5px;background:#2b2b2b;"></div><div class="r" style="left:0;top:355.90px;width:100%;height:1.5px;background:#2b2b2b;"></div><div class="r" style="left:0;top:366.55px;width:100%;height:1.5px;background:#2b2b2b;"></div><div class="r" style="left:0;top:377.20px;width:100%;height:1.5px;background:#2b2b2b;"></div><div class="r" style="left:0;top:387.85px;width:100%;height:1.5px;background:#2b2b2b;"></div><div class="r" style="left:0;top:398.50px;width:100%;height:1.5px;background:#2b2b2b;"></div><div class="r" style="left:0;top:409.15px;width:100%;height:1.5px;background:#2b2b2b;"></div><div class="r" style="left:0;top:419.80px;width:100%;height:1.5px;background:#2b2b2b;"></div><div class="r" style="left:0;top:430.45px;width:100%;height:1.5px;background:#2b2b2b;"></div><div class="r" style="left:0;top:441.10px;width:100%;height:1.5px;background:#2b2b2b;"></div><div class="r" style="left:0;top:451.75px;width:100%;height:1.5px;background:#2b2b2b;"></div><div class="r" style="left:0;top:462.40px;width:100%;height:1.5px;background:#2b2b2b;"></div><div class="r" style="left:0;top:473.05px;width:100%;height:1.5px;background:#2b2b2b;"></div><div class="r" style="left:0;top:483.70px;width:100%;height:1.5px;background:#2b2b2b;"></div><div class="r" style="left:0;top:494.35px;width:100%;height:1.5px;background:#2b2b2b;"></div><div class="r" style="left:0;top:505.00px;width:100%;height:1.5px;background:#2b2b2b;"></div><div class="r" style="left:0;top:515.65px;width:100%;height:1.5px;background:#2b2b2b;"></div><div class="r" style="left:0;top:526.30px;width:100%;height:1.5px;background:#2b2b2b;"></div><div class="r" style="left:0;top:536.95px;width:100%;height:1.5px;background:#2b2b2b;"></div><div class="r" style="left:0;top:547.60px;width:100%;height:1.5px;background:#2b2b2b;"></div><div class="r" style="left:0;top:558.25px;width:100%;height:1.5px;background:#2b2b2b;"></div><div class="r" style="left:0;top:568.90px;width:100%;height:1.5px;background:#2b2b2b;"></div><div class="r" style="left:0;top:579.55px;width:100%;height:1.5px;background:#2b2b2b;"></div><div class="r" style="left:0;top:590.20px;width:100%;height:1.5px;background:#2b2b2b;"></div><div class="r" style="left:0;top:600.85px;width:100%;height:1.5px;background:#2b2b2b;"></div><div class="r" style="left:0;top:611.50px;width:100%;height:1.5px;background:#2b2b2b;"></div><div class="r" style="left:0;top:622.15px;width:100%;height:1.5px;background:#2b2b2b;"></div><div class="r" style="left:0;top:632.80px;width:100%;height:1.5px;background:#2b2b2b;"></div><div class="r" style="left:0;top:643.45px;width:100%;height:1.5px;background:#2b2b2b;"></div><div class="r" style="left:0;top:654.10px;width:100%;height:1.5px;background:#2b2b2b;"></div><div class="r" style="left:0;top:664.75px;width:100%;height:1.5px;background:#2b2b2b;"></div><div class="r" style="left:0;top:675.40px;width:100%;height:1.5px;background:#2b2b2b;"></div><div class="r" style="left:0;top:686.05px;width:100%;height:1.5px;background:#2b2b2b;"></div><div class="r" style="left:0;top:696.70px;width:100%;height:1.5px;background:#2b2b2b;"></div><div class="r" style="left:0;top:707.35px;width:100%;height:1.5px;background:#2b2b2b;"></div><div class="r" style="left:0;top:718.00px;width:100%;height:1.5px;background:#2b2b2b;"></div><div class="r" style="left:0;top:728.65px;width:100%;height:1.5px;background:#2b2b2b;"></div><div class="r" style="left:0;top:739.30px;width:100%;height:1.5px;background:#2b2b2b;"></div><div class="r" style="left:0;top:749.95px;width:100%;height:1.5px;background:#2b2b2b;"></div><div class="r" style="left:0;top:760.60px;width:100%;height:1.5px;background:#2b2b2b;"></div><div class="r" style="left:0;top:771.25px;width:100%;height:1.5px;background:#2b2b2b;"></div><div class="r" style="left:0;top:781.90px;width:100%;height:1.5px;background:#2b2b2b;"></div><div class="r" style="left:0;top:792.55px;width:100%;height:1.5px;background:#2b2b2b;"></div><div class="r" style="left:0;top:803.20px;width:100%;height:1.5px;background:#2b2b2b;"></div><div class="r" style="left:0;top:813.85px;width:100%;height:1.5px;background:#2b2b2b;"></div><div class="r" style="left:0;top:824.50px;width:100%;height:1.5px;background:#2b2b2b;"></div><div class="r" style="left:0;top:835.15px;width:100%;height:1.5px;background:#2b2b2b;"></div><div class="r" style="left:0;top:845.80px;width:100%;height:1.5px;background:#2b2b2b;"></div><div class="r" style="left:0;top:856.45px;width:100%;height:1.5px;background:#2b2b2b;"></div><div class="r" style="left:0;top:867.10px;width:100%;height:1.5px;background:#2b2b2b;"></div><div class="r" style="left:0;top:877.75px;width:100%;height:1.5px;background:#2b2b2b;"></div><div class="r" style="left:0;top:888.40px;width:100%;height:1.5px;background:#2b2b2b;"></div>
<div class="r" style="left:90.00px;top:0;width:2px;height:100%;background:#0f0f0f;"></div>
<div class="r" style="left:196.50px;top:0;width:2px;height:100%;background:#1a1a1a;"></div>
<div class="r" style="left:303.00px;top:0;width:2px;height:100%;background:#1a1a1a;"></div>
<div class="r" style="left:409.50px;top:0;width:2px;height:100%;background:#1a1a1a;"></div>
<div class="r" style="left:516.00px;top:0;width:2px;height:100%;background:#1a1a1a;"></div>
<div class="r" style="left:622.50px;top:0;width:2px;height:100%;background:#1a1a1a;"></div>
<div class="r" style="left:729.00px;top:0;width:2px;height:100%;background:#1a1a1a;"></div>
<div class="r" style="left:835.50px;top:0;width:2px;height:100%;background:#1a1a1a;"></div>
<div class="r" style="left:0;top:25.50px;width:100%;height:2px;background:#1a1a1a;"></div>
<div class="r" style="left:0;top:132.00px;width:100%;height:2px;background:#1a1a1a;"></div>
<div class="r" style="left:0;top:238.50px;width:100%;height:2px;background:#0f0f0f;"></div>
<div class="r" style="left:0;top:345.00px;width:100%;height:2px;background:#1a1a1a;"></div>
<div class="r" style="left:0;top:451.50px;width:100%;height:2px;background:#1a1a1a;"></div>
<div class="r" style="left:0;top:558.00px;width:100%;height:2px;background:#1a1a1a;"></div>
<div class="r" style="left:0;top:664.50px;width:100%;height:2px;background:#1a1a1a;"></div>
<div class="r" style="left:0;top:771.00px;width:100%;height:2px;background:#1a1a1a;"></div>
<div class="r" style="left:0;top:877.50px;width:100%;height:2px;background:#1a1a1a;"></div>
</div>
<div class="r" style="left:422px;top:102px;width:863px;height:18px;background:rgba(52,52,52,0.92);"></div>
<div class="r" style="left:422px;top:120px;width:18px;height:876px;background:rgba(52,52,52,0.92);"></div>
<div class="r" style="left:512.00px;top:102px;width:2px;height:18px;background:#101010;"></div>
<div class="r" style="left:618.50px;top:102px;width:2px;height:18px;background:#1c1c1c;"></div>
<div class="r" style="left:725.00px;top:102px;width:2px;height:18px;background:#1c1c1c;"></div>
<div class="r" style="left:831.50px;top:102px;width:2px;height:18px;background:#1c1c1c;"></div>
<div class="r" style="left:938.00px;top:102px;width:2px;height:18px;background:#1c1c1c;"></div>
<div class="r" style="left:1044.50px;top:102px;width:2px;height:18px;background:#1c1c1c;"></div>
<div class="r" style="left:1151.00px;top:102px;width:2px;height:18px;background:#1c1c1c;"></div>
<div class="r" style="left:1257.50px;top:102px;width:2px;height:18px;background:#1c1c1c;"></div>
<div class="r" style="left:422px;top:127.50px;width:18px;height:2px;background:#1c1c1c;"></div>
<div class="r" style="left:422px;top:234.00px;width:18px;height:2px;background:#1c1c1c;"></div>
<div class="r" style="left:422px;top:340.50px;width:18px;height:2px;background:#101010;"></div>
<div class="r" style="left:422px;top:447.00px;width:18px;height:2px;background:#1c1c1c;"></div>
<div class="r" style="left:422px;top:553.50px;width:18px;height:2px;background:#1c1c1c;"></div>
<div class="r" style="left:422px;top:660.00px;width:18px;height:2px;background:#1c1c1c;"></div>
<div class="r" style="left:422px;top:766.50px;width:18px;height:2px;background:#1c1c1c;"></div>
<div class="r" style="left:422px;top:873.00px;width:18px;height:2px;background:#1c1c1c;"></div>
<div class="r" style="left:422px;top:979.50px;width:18px;height:2px;background:#1c1c1c;"></div>
<div class="r" style="left:440px;top:119px;width:845px;height:1px;background:#7c7c7c;"></div>
<div class="r" style="left:439px;top:119px;width:1px;height:877px;background:#7c7c7c;"></div>
<div class="r" style="left:445.65px;top:117px;width:1.5px;height:3px;background:#7c7c7c;"></div><div class="r" style="left:462.30px;top:117px;width:1.5px;height:3px;background:#7c7c7c;"></div><div class="r" style="left:478.95px;top:117px;width:1.5px;height:3px;background:#7c7c7c;"></div><div class="r" style="left:495.60px;top:117px;width:1.5px;height:3px;background:#7c7c7c;"></div><div class="r" style="left:512.25px;top:107px;width:1.5px;height:13px;background:#7c7c7c;"></div><div class="r" style="left:528.90px;top:117px;width:1.5px;height:3px;background:#7c7c7c;"></div><div class="r" style="left:545.55px;top:117px;width:1.5px;height:3px;background:#7c7c7c;"></div><div class="r" style="left:562.20px;top:117px;width:1.5px;height:3px;background:#7c7c7c;"></div><div class="r" style="left:578.85px;top:117px;width:1.5px;height:3px;background:#7c7c7c;"></div><div class="r" style="left:595.50px;top:114px;width:1.5px;height:6px;background:#7c7c7c;"></div><div class="r" style="left:612.15px;top:117px;width:1.5px;height:3px;background:#7c7c7c;"></div><div class="r" style="left:628.80px;top:117px;width:1.5px;height:3px;background:#7c7c7c;"></div><div class="r" style="left:645.45px;top:117px;width:1.5px;height:3px;background:#7c7c7c;"></div><div class="r" style="left:662.10px;top:117px;width:1.5px;height:3px;background:#7c7c7c;"></div><div class="r" style="left:678.75px;top:107px;width:1.5px;height:13px;background:#7c7c7c;"></div><div class="r" style="left:695.40px;top:117px;width:1.5px;height:3px;background:#7c7c7c;"></div><div class="r" style="left:712.05px;top:117px;width:1.5px;height:3px;background:#7c7c7c;"></div><div class="r" style="left:728.70px;top:117px;width:1.5px;height:3px;background:#7c7c7c;"></div><div class="r" style="left:745.35px;top:117px;width:1.5px;height:3px;background:#7c7c7c;"></div><div class="r" style="left:762.00px;top:114px;width:1.5px;height:6px;background:#7c7c7c;"></div><div class="r" style="left:778.65px;top:117px;width:1.5px;height:3px;background:#7c7c7c;"></div><div class="r" style="left:795.30px;top:117px;width:1.5px;height:3px;background:#7c7c7c;"></div><div class="r" style="left:811.95px;top:117px;width:1.5px;height:3px;background:#7c7c7c;"></div><div class="r" style="left:828.60px;top:117px;width:1.5px;height:3px;background:#7c7c7c;"></div><div class="r" style="left:845.25px;top:107px;width:1.5px;height:13px;background:#7c7c7c;"></div><div class="r" style="left:861.90px;top:117px;width:1.5px;height:3px;background:#7c7c7c;"></div><div class="r" style="left:878.55px;top:117px;width:1.5px;height:3px;background:#7c7c7c;"></div><div class="r" style="left:895.20px;top:117px;width:1.5px;height:3px;background:#7c7c7c;"></div><div class="r" style="left:911.85px;top:117px;width:1.5px;height:3px;background:#7c7c7c;"></div><div class="r" style="left:928.50px;top:114px;width:1.5px;height:6px;background:#7c7c7c;"></div><div class="r" style="left:945.15px;top:117px;width:1.5px;height:3px;background:#7c7c7c;"></div><div class="r" style="left:961.80px;top:117px;width:1.5px;height:3px;background:#7c7c7c;"></div><div class="r" style="left:978.45px;top:117px;width:1.5px;height:3px;background:#7c7c7c;"></div><div class="r" style="left:995.10px;top:117px;width:1.5px;height:3px;background:#7c7c7c;"></div><div class="r" style="left:1011.75px;top:107px;width:1.5px;height:13px;background:#7c7c7c;"></div><div class="r" style="left:1028.40px;top:117px;width:1.5px;height:3px;background:#7c7c7c;"></div><div class="r" style="left:1045.05px;top:117px;width:1.5px;height:3px;background:#7c7c7c;"></div><div class="r" style="left:1061.70px;top:117px;width:1.5px;height:3px;background:#7c7c7c;"></div><div class="r" style="left:1078.35px;top:117px;width:1.5px;height:3px;background:#7c7c7c;"></div><div class="r" style="left:1095.00px;top:114px;width:1.5px;height:6px;background:#7c7c7c;"></div><div class="r" style="left:1111.65px;top:117px;width:1.5px;height:3px;background:#7c7c7c;"></div><div class="r" style="left:1128.30px;top:117px;width:1.5px;height:3px;background:#7c7c7c;"></div><div class="r" style="left:1144.95px;top:117px;width:1.5px;height:3px;background:#7c7c7c;"></div><div class="r" style="left:1161.60px;top:117px;width:1.5px;height:3px;background:#7c7c7c;"></div><div class="r" style="left:1178.25px;top:107px;width:1.5px;height:13px;background:#7c7c7c;"></div><div class="r" style="left:1194.90px;top:117px;width:1.5px;height:3px;background:#7c7c7c;"></div><div class="r" style="left:1211.55px;top:117px;width:1.5px;height:3px;background:#7c7c7c;"></div><div class="r" style="left:1228.20px;top:117px;width:1.5px;height:3px;background:#7c7c7c;"></div><div class="r" style="left:1244.85px;top:117px;width:1.5px;height:3px;background:#7c7c7c;"></div><div class="r" style="left:1261.50px;top:114px;width:1.5px;height:6px;background:#7c7c7c;"></div><div class="r" style="left:1278.15px;top:117px;width:1.5px;height:3px;background:#7c7c7c;"></div><div class="r" style="left:437px;top:125.55px;width:3px;height:1.5px;background:#7c7c7c;"></div><div class="r" style="left:437px;top:142.20px;width:3px;height:1.5px;background:#7c7c7c;"></div><div class="r" style="left:437px;top:158.85px;width:3px;height:1.5px;background:#7c7c7c;"></div><div class="r" style="left:432px;top:175.50px;width:8px;height:1.5px;background:#7c7c7c;"></div><div class="r" style="left:437px;top:192.15px;width:3px;height:1.5px;background:#7c7c7c;"></div><div class="r" style="left:437px;top:208.80px;width:3px;height:1.5px;background:#7c7c7c;"></div><div class="r" style="left:437px;top:225.45px;width:3px;height:1.5px;background:#7c7c7c;"></div><div class="r" style="left:437px;top:242.10px;width:3px;height:1.5px;background:#7c7c7c;"></div><div class="r" style="left:434px;top:258.75px;width:6px;height:1.5px;background:#7c7c7c;"></div><div class="r" style="left:437px;top:275.40px;width:3px;height:1.5px;background:#7c7c7c;"></div><div class="r" style="left:437px;top:292.05px;width:3px;height:1.5px;background:#7c7c7c;"></div><div class="r" style="left:437px;top:308.70px;width:3px;height:1.5px;background:#7c7c7c;"></div><div class="r" style="left:437px;top:325.35px;width:3px;height:1.5px;background:#7c7c7c;"></div><div class="r" style="left:432px;top:342.00px;width:8px;height:1.5px;background:#7c7c7c;"></div><div class="r" style="left:437px;top:358.65px;width:3px;height:1.5px;background:#7c7c7c;"></div><div class="r" style="left:437px;top:375.30px;width:3px;height:1.5px;background:#7c7c7c;"></div><div class="r" style="left:437px;top:391.95px;width:3px;height:1.5px;background:#7c7c7c;"></div><div class="r" style="left:437px;top:408.60px;width:3px;height:1.5px;background:#7c7c7c;"></div><div class="r" style="left:434px;top:425.25px;width:6px;height:1.5px;background:#7c7c7c;"></div><div class="r" style="left:437px;top:441.90px;width:3px;height:1.5px;background:#7c7c7c;"></div><div class="r" style="left:437px;top:458.55px;width:3px;height:1.5px;background:#7c7c7c;"></div><div class="r" style="left:437px;top:475.20px;width:3px;height:1.5px;background:#7c7c7c;"></div><div class="r" style="left:437px;top:491.85px;width:3px;height:1.5px;background:#7c7c7c;"></div><div class="r" style="left:432px;top:508.50px;width:8px;height:1.5px;background:#7c7c7c;"></div><div class="r" style="left:437px;top:525.15px;width:3px;height:1.5px;background:#7c7c7c;"></div><div class="r" style="left:437px;top:541.80px;width:3px;height:1.5px;background:#7c7c7c;"></div><div class="r" style="left:437px;top:558.45px;width:3px;height:1.5px;background:#7c7c7c;"></div><div class="r" style="left:437px;top:575.10px;width:3px;height:1.5px;background:#7c7c7c;"></div><div class="r" style="left:434px;top:591.75px;width:6px;height:1.5px;background:#7c7c7c;"></div><div class="r" style="left:437px;top:608.40px;width:3px;height:1.5px;background:#7c7c7c;"></div><div class="r" style="left:437px;top:625.05px;width:3px;height:1.5px;background:#7c7c7c;"></div><div class="r" style="left:437px;top:641.70px;width:3px;height:1.5px;background:#7c7c7c;"></div><div class="r" style="left:437px;top:658.35px;width:3px;height:1.5px;background:#7c7c7c;"></div><div class="r" style="left:432px;top:675.00px;width:8px;height:1.5px;background:#7c7c7c;"></div><div class="r" style="left:437px;top:691.65px;width:3px;height:1.5px;background:#7c7c7c;"></div><div class="r" style="left:437px;top:708.30px;width:3px;height:1.5px;background:#7c7c7c;"></div><div class="r" style="left:437px;top:724.95px;width:3px;height:1.5px;background:#7c7c7c;"></div><div class="r" style="left:437px;top:741.60px;width:3px;height:1.5px;background:#7c7c7c;"></div><div class="r" style="left:434px;top:758.25px;width:6px;height:1.5px;background:#7c7c7c;"></div><div class="r" style="left:437px;top:774.90px;width:3px;height:1.5px;background:#7c7c7c;"></div><div class="r" style="left:437px;top:791.55px;width:3px;height:1.5px;background:#7c7c7c;"></div><div class="r" style="left:437px;top:808.20px;width:3px;height:1.5px;background:#7c7c7c;"></div><div class="r" style="left:437px;top:824.85px;width:3px;height:1.5px;background:#7c7c7c;"></div><div class="r" style="left:432px;top:841.50px;width:8px;height:1.5px;background:#7c7c7c;"></div><div class="r" style="left:437px;top:858.15px;width:3px;height:1.5px;background:#7c7c7c;"></div><div class="r" style="left:437px;top:874.80px;width:3px;height:1.5px;background:#7c7c7c;"></div><div class="r" style="left:437px;top:891.45px;width:3px;height:1.5px;background:#7c7c7c;"></div><div class="r" style="left:437px;top:908.10px;width:3px;height:1.5px;background:#7c7c7c;"></div><div class="r" style="left:434px;top:924.75px;width:6px;height:1.5px;background:#7c7c7c;"></div><div class="r" style="left:437px;top:941.40px;width:3px;height:1.5px;background:#7c7c7c;"></div><div class="r" style="left:437px;top:958.05px;width:3px;height:1.5px;background:#7c7c7c;"></div><div class="r" style="left:437px;top:974.70px;width:3px;height:1.5px;background:#7c7c7c;"></div><div class="r" style="left:437px;top:991.35px;width:3px;height:1.5px;background:#7c7c7c;"></div>
<div class="t" style="left:510.72px;top:105.03px;font-size:10px;line-height:10px;color:#9a9a9a;">0</div>
<div class="t" style="left:671.66px;top:105.03px;font-size:10px;line-height:10px;color:#9a9a9a;">500</div>
<div class="t" style="left:835.38px;top:105.03px;font-size:10px;line-height:10px;color:#9a9a9a;">1000</div>
<div class="t" style="left:1001.88px;top:105.03px;font-size:10px;line-height:10px;color:#9a9a9a;">1500</div>
<div class="t" style="left:1168.38px;top:105.03px;font-size:10px;line-height:10px;color:#9a9a9a;">2000</div>
<div class="t" style="left:425.50px;top:160.41px;font-size:10.5px;line-height:10.5px;color:#9a9a9a;">5</div>
<div class="t" style="left:425.50px;top:171.71px;font-size:10.5px;line-height:10.5px;color:#9a9a9a;">0</div>
<div class="t" style="left:425.50px;top:183.01px;font-size:10.5px;line-height:10.5px;color:#9a9a9a;">0</div>
<div class="t" style="left:425.50px;top:337.21px;font-size:10.5px;line-height:10.5px;color:#9a9a9a;">0</div>
<div class="t" style="left:425.50px;top:492.41px;font-size:10.5px;line-height:10.5px;color:#9a9a9a;">5</div>
<div class="t" style="left:425.50px;top:503.71px;font-size:10.5px;line-height:10.5px;color:#9a9a9a;">0</div>
<div class="t" style="left:425.50px;top:515.01px;font-size:10.5px;line-height:10.5px;color:#9a9a9a;">0</div>
<div class="t" style="left:425.50px;top:653.76px;font-size:10.5px;line-height:10.5px;color:#9a9a9a;">1</div>
<div class="t" style="left:425.50px;top:665.06px;font-size:10.5px;line-height:10.5px;color:#9a9a9a;">0</div>
<div class="t" style="left:425.50px;top:676.36px;font-size:10.5px;line-height:10.5px;color:#9a9a9a;">0</div>
<div class="t" style="left:425.50px;top:687.66px;font-size:10.5px;line-height:10.5px;color:#9a9a9a;">0</div>
<div class="t" style="left:425.50px;top:820.26px;font-size:10.5px;line-height:10.5px;color:#9a9a9a;">1</div>
<div class="t" style="left:425.50px;top:831.56px;font-size:10.5px;line-height:10.5px;color:#9a9a9a;">5</div>
<div class="t" style="left:425.50px;top:842.86px;font-size:10.5px;line-height:10.5px;color:#9a9a9a;">0</div>
<div class="t" style="left:425.50px;top:854.16px;font-size:10.5px;line-height:10.5px;color:#9a9a9a;">0</div>
<svg class="r" style="left:422px;top:102px;" width="9" height="9" viewBox="0 0 9 9"><path d="M0 0 L9 0 L0 9 Z" fill="#0a84ff"/></svg>
<svg class="r" style="left:445px;top:125px;" width="835" height="866" viewBox="0 0 835 866"><defs><linearGradient id="og" gradientUnits="userSpaceOnUse" x1="0" y1="4" x2="0" y2="862"><stop offset="0" stop-color="#a57700"/><stop offset="1" stop-color="#735100"/></linearGradient></defs><rect x="7.5" y="7.5" width="820" height="851" rx="5.5" fill="none" stroke="url(#og)" stroke-width="7"/></svg>
<div class="t" style="left:446.50px;top:125.02px;font-size:21px;line-height:21px;color:rgba(200,200,200,0.32);font-weight:700;transform:scaleX(0.8511);transform-origin:0 0;">Zoom -4</div>
<div class="t" style="left:446.50px;top:921.02px;font-size:21px;line-height:21px;color:rgba(200,200,200,0.32);font-weight:700;transform:scaleX(0.8764);transform-origin:0 0;">Device Content Safe Zone</div>
<div class="t" style="left:446.50px;top:946.02px;font-size:21px;line-height:21px;color:rgba(200,200,200,0.32);font-weight:700;transform:scaleX(0.8246);transform-origin:0 0;">No Device Safe Zone Set</div>
<div class="t" style="left:448.00px;top:971.02px;font-size:21px;line-height:21px;color:rgba(200,200,200,0.32);font-weight:700;transform:scaleX(0.9049);transform-origin:0 0;">1280 x 720 (16:9)</div>
<div class="t" style="left:1127.00px;top:971.02px;font-size:21px;line-height:21px;color:rgba(200,200,200,0.32);font-weight:700;transform:scaleX(0.8711);transform-origin:0 0;">DPI Scale 0.67</div>
<svg class="r" style="left:1259px;top:975px;" width="18" height="18" viewBox="0 0 18 18"><g fill="none" stroke="#e8e8f0" stroke-width="2"><circle cx="9" cy="9" r="4.5"/></g><g stroke="#e8e8f0" stroke-width="2.4"><path d="M9 1.5 V4"/><path d="M9 14 V16.5"/><path d="M1.5 9 H4"/><path d="M14 9 H16.5"/><path d="M3.7 3.7 L5.4 5.4"/><path d="M12.6 12.6 L14.3 14.3"/><path d="M3.7 14.3 L5.4 12.6"/><path d="M12.6 5.4 L14.3 3.7"/></g></svg>
<div class="r" style="left:0;top:0;width:1920px;height:192px;overflow:hidden;">
<div class="t" style="left:940.00px;top:142.86px;font-size:74px;line-height:74px;color:#f0ac00;font-weight:700;transform:scaleX(0.7078);transform-origin:0 0;-webkit-text-stroke:1.1px #f0ac00;">SIMULATING</div>
</div>
<div class="r" style="left:805px;top:121px;width:61px;height:24px;border-radius:12.0px;overflow:hidden;box-shadow:0 0 0 1px #161616;"><div class="r" style="left:0px;top:0;width:24.5px;height:100%;background:rgba(44,44,44,0.82);"></div><div class="r" style="left:24.5px;top:0;width:36.5px;height:100%;background:rgba(44,44,44,0.82);"></div></div>
<div class="r" style="left:829px;top:121px;width:1px;height:24px;background:#181818;"></div>
<svg class="r" style="left:810px;top:125px;" width="16" height="16" viewBox="0 0 16 16"><circle cx="8" cy="8" r="6.6" fill="none" stroke="#c8c8c8" stroke-width="1.3"/><path d="M4 4 Q6 5 5 7 Q7 9 6 11 L4 10 Z M8 2 Q10 4 12 3 Q13 6 10 7 Q12 9 11 13 Q9 12 9 10 Q7 9 8 7 Z" fill="#c8c8c8"/></svg>
<div class="t" style="left:833.50px;top:126.20px;font-size:13px;line-height:13px;color:#cfcfcf;letter-spacing:-0.398px;">None</div>
<div class="r" style="left:874px;top:121px;width:48px;height:24px;border-radius:12.0px;overflow:hidden;box-shadow:0 0 0 1px #161616;"><div class="r" style="left:0px;top:0;width:24px;height:100%;background:rgba(8,108,215,0.95);"></div><div class="r" style="left:24px;top:0;width:24px;height:100%;background:rgba(8,108,215,0.95);"></div></div>
<div class="r" style="left:898px;top:121px;width:1px;height:24px;background:#0a4a90;"></div>
<svg class="r" style="left:879px;top:125px;" width="15" height="15" viewBox="0 0 15 15"><rect x="1" y="1" width="13" height="13" fill="#2a6ac0" stroke="#9aa" stroke-width="1" stroke-dasharray="2 1.5"/></svg>
<svg class="r" style="left:903px;top:125px;" width="13" height="15" viewBox="0 0 13 15"><rect x="1" y="6.5" width="11" height="8" rx="1" fill="#fff"/><path d="M3.5 6.5 V4.5 Q3.5 1.5 6.5 1.5 Q9.5 1.5 9.5 4.5 V6.5" stroke="#fff" stroke-width="1.8" fill="none"/><rect x="6" y="9" width="1.3" height="3" fill="#0a6ed0"/></svg>
<div class="r" style="left:930px;top:121px;width:48px;height:24px;border-radius:12.0px;overflow:hidden;box-shadow:0 0 0 1px #161616;"><div class="r" style="left:0px;top:0;width:24.5px;height:100%;background:rgba(8,108,215,0.95);"></div><div class="r" style="left:24.5px;top:0;width:23.5px;height:100%;background:rgba(44,44,44,0.82);"></div></div>
<svg class="r" style="left:935px;top:126px;" width="16" height="14" viewBox="0 0 16 14"><rect x="1" y="0.5" width="3" height="12" rx="1.4" fill="#e0e0e0"/><rect x="6" y="0.5" width="9" height="2" rx="1" fill="#e0e0e0"/><rect x="6" y="4" width="9" height="9" rx="1.5" fill="#e0e0e0"/></svg>
<div class="t" style="left:960.50px;top:126.80px;font-size:13px;line-height:13px;color:#c8c8c8;font-weight:700;">R</div>
<div class="r" style="left:986px;top:121px;width:38.5px;height:24px;border-radius:12.0px;overflow:hidden;box-shadow:0 0 0 1px #161616;"><div class="r" style="left:0px;top:0;width:24.5px;height:100%;background:rgba(8,108,215,0.95);"></div><div class="r" style="left:24.5px;top:0;width:14.0px;height:100%;background:rgba(44,44,44,0.82);"></div></div>
<svg class="r" style="left:991px;top:126px;" width="14" height="14" viewBox="0 0 14 14"><rect x="1" y="1" width="12" height="12" fill="none" stroke="#fff" stroke-width="1.4"/><path d="M5 1 V13 M9 1 V13 M1 5 H13 M1 9 H13" stroke="#fff" stroke-width="1.2"/></svg>
<div class="t" style="left:1013.50px;top:126.80px;font-size:13px;line-height:13px;color:#b8b8b8;">4</div>
<div class="r" style="left:1025.0px;top:121.5px;width:23px;height:23px;border-radius:12px;background:rgba(44,44,44,0.55);box-shadow:0 0 0 1px rgba(20,20,20,0.8);"></div>
<div class="r" style="left:1049.0px;top:121.5px;width:23px;height:23px;border-radius:12px;background:rgba(44,44,44,0.55);box-shadow:0 0 0 1px rgba(20,20,20,0.8);"></div>
<div class="r" style="left:1072.5px;top:121.5px;width:23px;height:23px;border-radius:12px;background:rgba(44,44,44,0.55);box-shadow:0 0 0 1px rgba(20,20,20,0.8);"></div>
<svg class="r" style="left:1029px;top:125px;" width="16" height="16" viewBox="0 0 16 16"><path d="M1 4 V1 H4 M12 1 H15 V4 M15 12 V15 H12 M4 15 H1 V12" stroke="#777" stroke-width="1" fill="none"/><path d="M5 4 L11 9 L8.5 9.5 L10 13 L8.8 13.5 L7.3 10 L5 12 Z" fill="#bbb"/></svg>
<svg class="r" style="left:1052px;top:126px;" width="17" height="14" viewBox="0 0 17 14"><rect x="1" y="1" width="15" height="12" fill="none" stroke="#555" stroke-width="1"/><path d="M2 12 L6 5 L9 9 L11 7 L15 12 Z" fill="#6a6a6a"/></svg>
<svg class="r" style="left:1076px;top:125px;" width="17" height="16" viewBox="0 0 17 16"><path d="M7.5 2 V14 L1 14 Z" fill="none" stroke="#555" stroke-width="1"/><path d="M9.5 2 L16 14 L9.5 14 Z" fill="#6a6a6a"/></svg>
<div class="r" style="left:1097px;top:121px;width:94.5px;height:26px;border-radius:13.0px;overflow:hidden;box-shadow:0 0 0 1px #161616;"><div class="r" style="left:0px;top:0;width:94.5px;height:100%;background:rgba(44,44,44,0.82);"></div></div>
<div class="t" style="left:1100.50px;top:127.60px;font-size:13px;line-height:13px;color:#cfcfcf;letter-spacing:-0.101px;">Screen Size</div>
<svg class="r" style="left:1173px;top:131px;" width="12" height="8" viewBox="0 0 12 8"><path d="M1.5 1.5 L6 6 L10.5 1.5" stroke="#cfcfcf" stroke-width="1.5" fill="none"/></svg>
<div class="r" style="left:1196px;top:121px;width:86px;height:26px;border-radius:13.0px;overflow:hidden;box-shadow:0 0 0 1px #161616;"><div class="r" style="left:0px;top:0;width:86px;height:100%;background:rgba(44,44,44,0.82);"></div></div>
<div class="t" style="left:1200.00px;top:127.60px;font-size:13px;line-height:13px;color:#cfcfcf;letter-spacing:-0.038px;">Fill Screen</div>
<svg class="r" style="left:1264px;top:131px;" width="12" height="8" viewBox="0 0 12 8"><path d="M1.5 1.5 L6 6 L10.5 1.5" stroke="#cfcfcf" stroke-width="1.5" fill="none"/></svg>
<div class="r" style="left:1290px;top:102px;width:626px;height:25px;background:#151515;"></div>
<div class="r" style="left:1290px;top:102px;width:160px;height:25px;background:#242424;border-radius:4px 4px 0 0;"></div>
<svg class="r" style="left:1294px;top:105px;" width="18" height="18" viewBox="0 0 18 18"><path d="M2 16 L4 11 L13 2 L16 5 L7 14 Z" fill="#d0d0d0"/><path d="M2 16 L4 11 L7 14 Z" fill="#9a9a9a"/><g fill="#8a8a8a"><rect x="2" y="2" width="7" height="1.5"/><rect x="10" y="8.5" width="6" height="1.5"/><rect x="8" y="12" width="8" height="1.5"/><rect x="4" y="15.5" width="12" height="1.5"/></g></svg>
<div class="t" style="left:1317.00px;top:106.80px;font-size:13px;line-height:13px;color:#d0d0d0;letter-spacing:0.036px;">Details</div>
<svg class="r" style="left:1428px;top:108px;" width="9" height="9" viewBox="0 0 9 9"><path d="M1 1 L8 8 M8 1 L1 8" stroke="#d0d0d0" stroke-width="1.7"/></svg>
<div class="r" style="left:1290px;top:127px;width:626px;height:869px;background:#242424;"></div>
<div class="r" style="left:581px;top:192px;width:1286px;height:759px;background:#0c0c0c;"></div>
<div class="r" style="left:583px;top:194px;width:1281px;height:33px;background:#1b1b1b;box-shadow: inset 0 1px 0 #3a3a3a, inset 1px 0 0 #3a3a3a, inset -1px 0 0 #2a2a2a;"></div>
<svg class="r" style="left:588px;top:198px;" width="25" height="25" viewBox="0 0 25 25"><defs><linearGradient id="ug2" x1="0" y1="0" x2="0" y2="1"><stop offset="0" stop-color="#8a8a8a"/><stop offset="0.45" stop-color="#c4c4c4"/><stop offset="1" stop-color="#5a6060"/></linearGradient></defs>
<g transform="translate(0.1 0.1) scale(0.535)"><circle cx="23.3" cy="23.3" r="20.5" fill="#0e0e0e" stroke="#6c6c6c" stroke-width="2"/>
<path d="M10.6 22.6 Q12 16 21.2 10.6 Q19.6 13.5 21.2 18.5 L21.2 29.5 L25.8 29.5 L25.8 15.7 L24.9 14.8 Q29 13.5 34.1 12 Q31.8 14 31.8 16.2 L31.8 27.7 L36.5 26.3 Q34 33 28.6 35.1 L23.1 36.9 Q18 34 13.4 31.4 L15.2 29.5 L15.2 19.8 Q12.5 20.5 10.6 22.6 Z" fill="url(#ug2)"/></g></svg>
<div class="t" style="left:1016.50px;top:204.60px;font-size:13px;line-height:13px;color:#c8c8c8;letter-spacing:-0.157px;">PNTUnrealDemo Preview [NetMode: Standalone 0]  (64-bit/PC D3D SM6)</div>
<div class="r" style="left:1754px;top:206px;width:11px;height:1.3px;background:#d0d0d0;"></div>
<svg class="r" style="left:1795px;top:201px;" width="12" height="12" viewBox="0 0 12 12"><rect x="0.8" y="0.8" width="10.4" height="10.4" fill="none" stroke="#d0d0d0" stroke-width="1.2"/></svg>
<svg class="r" style="left:1836px;top:200px;" width="13" height="13" viewBox="0 0 13 13"><path d="M1 1 L12 12 M12 1 L1 12" stroke="#d0d0d0" stroke-width="1.3"/></svg>
<svg class="r" style="left:584px;top:227px;" width="1280" height="722" viewBox="0 0 1280 722">
<defs>
<radialGradient id="skyb" gradientUnits="userSpaceOnUse" cx="1101" cy="164" r="1110" gradientTransform="translate(1101 164) scale(1 1.216) translate(-1101 -164)">
<stop offset="0" stop-color="#d2cac6"/><stop offset="0.19" stop-color="#c6bcb9"/><stop offset="0.40" stop-color="#a39aa3"/><stop offset="0.46" stop-color="#8f92aa"/><stop offset="0.54" stop-color="#6c86ad"/><stop offset="0.715" stop-color="#5a7aa8"/><stop offset="1" stop-color="#49638e"/>
</radialGradient>
<linearGradient id="upper" x1="0" y1="0" x2="0" y2="1">
<stop offset="0" stop-color="#4e72a4"/><stop offset="0.2" stop-color="#5c80b0"/><stop offset="0.5" stop-color="#92a6c4"/><stop offset="0.85" stop-color="#b8bcc8"/><stop offset="1" stop-color="#c4bec0"/>
</linearGradient>
<filter id="bl1" x="-20%" y="-20%" width="140%" height="140%"><feGaussianBlur stdDeviation="9"/></filter>
<filter id="bl2" x="-20%" y="-20%" width="140%" height="140%"><feGaussianBlur stdDeviation="18"/></filter>
<filter id="bl4" x="-100%" y="-100%" width="300%" height="300%"><feGaussianBlur stdDeviation="7"/></filter>
<filter id="bl3" x="-50%" y="-50%" width="200%" height="200%"><feGaussianBlur stdDeviation="5"/></filter>
<linearGradient id="haze" x1="0" y1="0" x2="0" y2="1">
<stop offset="0" stop-color="#cfc6c2" stop-opacity="0"/><stop offset="0.35" stop-color="#cbc2bd" stop-opacity="0.9"/><stop offset="1" stop-color="#c6bcb9" stop-opacity="0"/>
</linearGradient>
</defs>
<rect x="0" y="0" width="1280" height="722" fill="url(#skyb)"/>
<g filter="url(#bl2)">
<rect x="-40" y="-40" width="1360" height="385" fill="url(#upper)"/>
</g>
<g filter="url(#bl1)">
<ellipse cx="910" cy="200" rx="75" ry="140" fill="#a6b0c6" opacity="0.6"/>
<ellipse cx="20" cy="15" rx="60" ry="45" fill="#aca4b2"/>
<ellipse cx="300" cy="15" rx="120" ry="50" fill="#cdc5c5"/>
<ellipse cx="215" cy="45" rx="60" ry="25" fill="#c8c0c2"/>
<ellipse cx="112" cy="18" rx="95" ry="26" fill="#4f6e9c" transform="rotate(34 112 18)"/>
<ellipse cx="10" cy="40" rx="30" ry="20" fill="#a8a2b2"/>
<ellipse cx="760" cy="10" rx="120" ry="55" fill="#d5cdcb"/>
<ellipse cx="720" cy="40" rx="80" ry="30" fill="#d0c8c8"/>
<ellipse cx="880" cy="10" rx="30" ry="25" fill="#d8d2cc"/>
<ellipse cx="935" cy="45" rx="78" ry="40" fill="#e8e2da" transform="rotate(-12 935 45)"/>
<ellipse cx="1124" cy="75" rx="165" ry="72" fill="#ece6de"/>
<ellipse cx="1216" cy="22" rx="75" ry="34" fill="#e4ded8"/>
<ellipse cx="1126" cy="173" rx="155" ry="26" fill="#e4dfda"/>
<ellipse cx="1230" cy="135" rx="80" ry="40" fill="#e6e0da"/>
<ellipse cx="1050" cy="138" rx="95" ry="32" fill="#e6e0da"/>
<ellipse cx="1206" cy="203" rx="75" ry="32" fill="#e0dcd6"/>
<ellipse cx="936" cy="201" rx="38" ry="26" fill="#dedad6"/>
<ellipse cx="1006" cy="255" rx="135" ry="26" fill="#e0dcd8"/>
<ellipse cx="1176" cy="283" rx="115" ry="38" fill="#dcd6d0"/>
<ellipse cx="890" cy="280" rx="40" ry="18" fill="#d4d2d4"/>
<rect x="850" y="285" width="440" height="60" fill="#d8d2cc"/>
<ellipse cx="1200" cy="240" rx="90" ry="20" fill="#d0d0d2" opacity="0.8"/>
</g>
<g filter="url(#bl3)">
<ellipse cx="1061" cy="8" rx="50" ry="14" fill="#a0a4b8"/>
<ellipse cx="1076" cy="213" rx="80" ry="12" fill="#c8c8cc"/>
<ellipse cx="1128" cy="128" rx="12" ry="18" fill="#cfcccc"/>
</g>
<rect x="0" y="300" width="1280" height="150" fill="url(#haze)"/>
<g filter="url(#bl2)"><ellipse cx="1260" cy="700" rx="140" ry="90" fill="#9c929a" opacity="0.8"/></g>
<g filter="url(#bl4)"><ellipse cx="1101" cy="165" rx="20" ry="17" fill="#ffffff"/></g>
<ellipse cx="1101" cy="164" rx="90" ry="60" fill="#ffffff" opacity="0.25" filter="url(#bl2)"/>
</svg>
<div class="r" style="left:480px;top:270px;width:960px;height:540px;background:#ffffff;border:1px solid #666666;box-sizing:border-box;"></div>
</body></html>
